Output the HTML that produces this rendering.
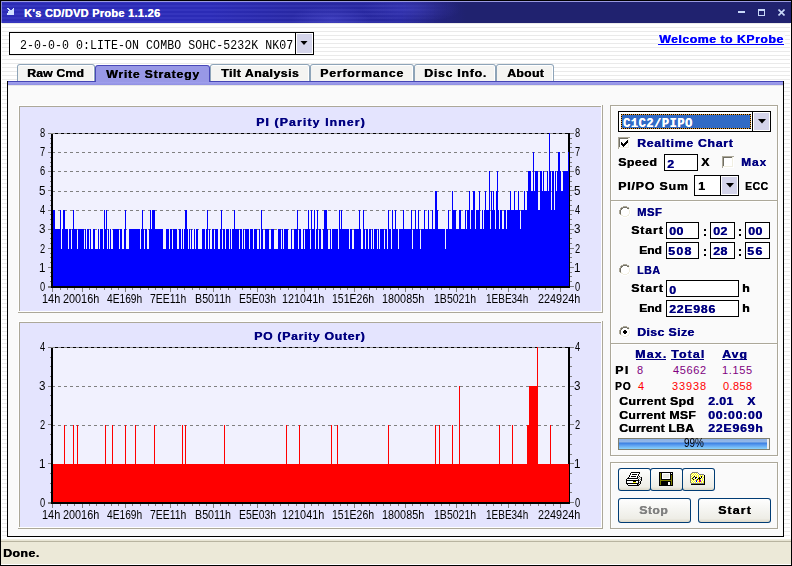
<!DOCTYPE html><html><head><meta charset="utf-8"><style>
html,body{margin:0;padding:0;}
body{width:792px;height:566px;position:relative;overflow:hidden;background:#fff;font-family:"Liberation Sans",sans-serif;}
#root>div,#root>svg{position:absolute;}
.t{white-space:pre;}
</style></head><body><div id="root">
<div style="left:0px;top:0px;width:792px;height:566px;background:#000"></div>
<div style="left:1px;top:23px;width:790px;height:542px;background:#fff"></div>
<div style="left:2px;top:23px;width:788px;height:541px;background:repeating-linear-gradient(to bottom,#eaeaea 0,#eaeaea 1px,#fff 1px,#fff 4px)"></div>
<div style="left:1px;top:1px;width:790px;height:22px;background:radial-gradient(ellipse 40px 14px at 330px 18px,rgba(90,90,230,0.35),transparent),radial-gradient(ellipse 50px 14px at 410px 8px,rgba(90,90,230,0.3),transparent),linear-gradient(to right,#2d2dbc 0,#2d2dbc 210px,#2a2aaa 290px,#2828a2 400px,#23237e 440px,#20226f 465px,#20226f 100%)"></div>
<div style="left:1px;top:1px;width:790px;height:22px;background:repeating-linear-gradient(to bottom,rgba(255,255,255,0.04) 0,rgba(255,255,255,0.04) 2px,rgba(0,0,0,0.03) 2px,rgba(0,0,0,0.03) 4px);-webkit-mask-image:linear-gradient(to right,#000 0,#000 380px,transparent 450px)"></div>
<div style="left:1px;top:1px;width:790px;height:1px;background:#9a9ae0"></div>
<div style="left:1px;top:1px;width:1px;height:22px;background:#8888d8"></div>
<svg style="left:7px;top:8px" width="7" height="7" shape-rendering="crispEdges"><rect x="0" y="0" width="1" height="1" fill="#d0e0ff"/><rect x="1" y="0" width="1" height="1" fill="#d0e0ff"/><rect x="6" y="0" width="1" height="1" fill="#d0e0ff"/><rect x="1" y="1" width="1" height="1" fill="#d0e0ff"/><rect x="2" y="1" width="1" height="1" fill="#d0e0ff"/><rect x="5" y="1" width="1" height="1" fill="#d0e0ff"/><rect x="6" y="1" width="1" height="1" fill="#d0e0ff"/><rect x="2" y="2" width="1" height="1" fill="#d0e0ff"/><rect x="3" y="2" width="1" height="1" fill="#d0e0ff"/><rect x="4" y="2" width="1" height="1" fill="#d0e0ff"/><rect x="5" y="2" width="1" height="1" fill="#d0e0ff"/><rect x="6" y="2" width="1" height="1" fill="#d0e0ff"/><rect x="1" y="3" width="1" height="1" fill="#d0e0ff"/><rect x="2" y="3" width="1" height="1" fill="#d0e0ff"/><rect x="3" y="3" width="1" height="1" fill="#d0e0ff"/><rect x="4" y="3" width="1" height="1" fill="#d0e0ff"/><rect x="5" y="3" width="1" height="1" fill="#d0e0ff"/><rect x="6" y="3" width="1" height="1" fill="#d0e0ff"/><rect x="1" y="4" width="1" height="1" fill="#d0e0ff"/><rect x="2" y="4" width="1" height="1" fill="#d0e0ff"/><rect x="3" y="4" width="1" height="1" fill="#d0e0ff"/><rect x="4" y="4" width="1" height="1" fill="#d0e0ff"/><rect x="5" y="4" width="1" height="1" fill="#d0e0ff"/><rect x="6" y="4" width="1" height="1" fill="#d0e0ff"/><rect x="0" y="5" width="1" height="1" fill="#d0e0ff"/><rect x="1" y="5" width="1" height="1" fill="#d0e0ff"/><rect x="2" y="5" width="1" height="1" fill="#d0e0ff"/><rect x="3" y="5" width="1" height="1" fill="#d0e0ff"/><rect x="4" y="5" width="1" height="1" fill="#d0e0ff"/><rect x="5" y="5" width="1" height="1" fill="#d0e0ff"/><rect x="6" y="5" width="1" height="1" fill="#d0e0ff"/><rect x="0" y="6" width="1" height="1" fill="#d0e0ff"/><rect x="1" y="6" width="1" height="1" fill="#d0e0ff"/><rect x="2" y="6" width="1" height="1" fill="#d0e0ff"/><rect x="3" y="6" width="1" height="1" fill="#d0e0ff"/><rect x="4" y="6" width="1" height="1" fill="#d0e0ff"/><rect x="5" y="6" width="1" height="1" fill="#d0e0ff"/><rect x="6" y="6" width="1" height="1" fill="#d0e0ff"/></svg>
<div style="left:738px;top:11px;width:7px;height:2px;background:#c8d8f8"></div>
<div style="left:758px;top:9px;width:7px;height:1px;background:#c8d8f8"></div>
<div style="left:758px;top:15px;width:7px;height:1px;background:#c8d8f8"></div>
<div style="left:758px;top:9px;width:1px;height:7px;background:#c8d8f8"></div>
<div style="left:764px;top:9px;width:1px;height:7px;background:#c8d8f8"></div>
<div style="left:758px;top:10px;width:7px;height:1px;background:#c8d8f8"></div>
<svg style="left:778px;top:9px" width="7" height="7" viewBox="0 0 7 7"><path d="M0.5 0.5L6.5 6.5M6.5 0.5L0.5 6.5" stroke="#c8d8f8" stroke-width="1.6"/></svg>
<div class="t" style="left:24.00px;top:8.00px;color:#fff;font:bold 11px 'Liberation Sans';line-height:11px;letter-spacing:0.288px;text-shadow:0.35px 0 0 currentColor;text-shadow:0.2px 0 0 #fff;">K's CD/DVD Probe 1.1.26</div>
<div style="left:9px;top:32px;width:305px;height:23px;background:#000"></div>
<div style="left:10px;top:33px;width:303px;height:21px;background:#fff"></div>
<div style="left:295px;top:33px;width:1px;height:21px;background:#000"></div>
<div style="left:296px;top:33px;width:17px;height:21px;background:#fff"></div>
<div style="left:297px;top:34px;width:15px;height:19px;background:#d4d4ea"></div>
<svg style="left:300px;top:41px" width="8" height="5" viewBox="0 0 8 5"><path d="M0.5 0h7L4 4z" fill="#000"/></svg>
<div class="t" style="left:20.00px;top:40.00px;color:#000;font:normal 12px 'Liberation Mono';line-height:12px;letter-spacing:0.055px;transform:scale(0.9656,1.0);transform-origin:0 0;">2-0-0-0 0:LITE-ON COMBO SOHC-5232K NK07</div>
<div style="left:658px;top:32px;width:127px;height:13px;background:#fcfcfc"></div>
<div class="t" style="left:659.00px;top:34.00px;color:#0000ff;font:bold 11px 'Liberation Sans';line-height:11px;letter-spacing:0.445px;transform:scale(1.1200,1.0);transform-origin:0 0;text-shadow:0.35px 0 0 currentColor;">Welcome to KProbe</div>
<div style="left:658px;top:44px;width:126px;height:1px;background:#0000ff"></div>
<div style="left:7px;top:81px;width:777px;height:456px;background:#000"></div>
<div style="left:8px;top:82px;width:775px;height:454px;background:#fafafa"></div>
<div style="left:8px;top:81px;width:775px;height:1px;background:#4545b5"></div>
<div style="left:8px;top:82px;width:775px;height:3px;background:linear-gradient(to bottom,#a0a0ee,#9090e2)"></div>
<div style="left:8px;top:85px;width:775px;height:1px;background:#e6e6e6"></div>
<div style="left:17px;top:64px;width:78px;height:18px;background:#8ea4b8;border-radius:3px 3px 0 0"></div>
<div style="left:18px;top:65px;width:76px;height:16px;background:#fff;border-radius:2px 2px 0 0"></div>
<div style="left:18px;top:66px;width:75px;height:15px;background:#f4f4f2"></div>
<div class="t" style="left:27.00px;top:68.00px;color:#000;font:bold 11px 'Liberation Sans';line-height:11px;letter-spacing:0.100px;transform:scale(1.1200,1.0);transform-origin:0 0;text-shadow:0.35px 0 0 currentColor;">Raw Cmd</div>
<div style="left:210px;top:64px;width:100px;height:18px;background:#8ea4b8;border-radius:3px 3px 0 0"></div>
<div style="left:211px;top:65px;width:98px;height:16px;background:#fff;border-radius:2px 2px 0 0"></div>
<div style="left:211px;top:66px;width:97px;height:15px;background:#f4f4f2"></div>
<div class="t" style="left:221.00px;top:68.00px;color:#000;font:bold 11px 'Liberation Sans';line-height:11px;letter-spacing:0.430px;transform:scale(1.1200,1.0);transform-origin:0 0;text-shadow:0.35px 0 0 currentColor;">Tilt Analysis</div>
<div style="left:310px;top:64px;width:104px;height:18px;background:#8ea4b8;border-radius:3px 3px 0 0"></div>
<div style="left:311px;top:65px;width:102px;height:16px;background:#fff;border-radius:2px 2px 0 0"></div>
<div style="left:311px;top:66px;width:101px;height:15px;background:#f4f4f2"></div>
<div class="t" style="left:320.00px;top:68.00px;color:#000;font:bold 11px 'Liberation Sans';line-height:11px;letter-spacing:0.697px;transform:scale(1.1200,1.0);transform-origin:0 0;text-shadow:0.35px 0 0 currentColor;">Performance</div>
<div style="left:414px;top:64px;width:82px;height:18px;background:#8ea4b8;border-radius:3px 3px 0 0"></div>
<div style="left:415px;top:65px;width:80px;height:16px;background:#fff;border-radius:2px 2px 0 0"></div>
<div style="left:415px;top:66px;width:79px;height:15px;background:#f4f4f2"></div>
<div class="t" style="left:424.00px;top:68.00px;color:#000;font:bold 11px 'Liberation Sans';line-height:11px;letter-spacing:0.656px;transform:scale(1.1200,1.0);transform-origin:0 0;text-shadow:0.35px 0 0 currentColor;">Disc Info.</div>
<div style="left:496px;top:64px;width:58px;height:18px;background:#8ea4b8;border-radius:3px 3px 0 0"></div>
<div style="left:497px;top:65px;width:56px;height:16px;background:#fff;border-radius:2px 2px 0 0"></div>
<div style="left:497px;top:66px;width:55px;height:15px;background:#f4f4f2"></div>
<div class="t" style="left:507.00px;top:68.00px;color:#000;font:bold 11px 'Liberation Sans';line-height:11px;letter-spacing:0.234px;transform:scale(1.1200,1.0);transform-origin:0 0;text-shadow:0.35px 0 0 currentColor;">About</div>
<div style="left:17px;top:81px;width:537px;height:1px;background:#4545b5"></div>
<div style="left:95px;top:65px;width:115px;height:17px;background:#4848b8;border-radius:3px 3px 0 0"></div>
<div style="left:96px;top:66px;width:113px;height:16px;background:#9898e6;border-radius:2px 2px 0 0"></div>
<div style="left:95px;top:82px;width:115px;height:3px;background:linear-gradient(to bottom,#a0a0ee,#9090e2)"></div>
<div class="t" style="left:106.00px;top:69.00px;color:#000;font:bold 11px 'Liberation Sans';line-height:11px;letter-spacing:0.667px;transform:scale(1.1200,1.0);transform-origin:0 0;text-shadow:0.35px 0 0 currentColor;">Write Strategy</div>
<div style="left:1px;top:539px;width:790px;height:1px;background:#f0eee2"></div>
<div style="left:1px;top:540px;width:790px;height:1px;background:#e8e5d4"></div>
<div style="left:1px;top:541px;width:790px;height:1px;background:#b8b4a0"></div>
<div style="left:1px;top:542px;width:790px;height:22px;background:#ece9d8"></div>
<div style="left:1px;top:564px;width:790px;height:1px;background:#fff"></div>
<div class="t" style="left:3.00px;top:548.00px;color:#000;font:bold 11px 'Liberation Sans';line-height:11px;letter-spacing:0.411px;transform:scale(1.1200,1.0);transform-origin:0 0;text-shadow:0.35px 0 0 currentColor;">Done.</div>
<div style="left:18px;top:105px;width:584px;height:1px;background:#fff"></div>
<div style="left:18px;top:105px;width:1px;height:207px;background:#fff"></div>
<div style="left:19px;top:106px;width:583px;height:1px;background:#aca899"></div>
<div style="left:19px;top:106px;width:1px;height:206px;background:#aca899"></div>
<div style="left:602px;top:105px;width:1px;height:208px;background:#aca899"></div>
<div style="left:18px;top:312px;width:585px;height:1px;background:#aca899"></div>
<div style="left:601px;top:106px;width:1px;height:206px;background:#fff"></div>
<div style="left:19px;top:311px;width:583px;height:1px;background:#fff"></div>
<div style="left:20px;top:107px;width:581px;height:204px;background:#e4e4fe"></div>
<div style="left:53px;top:134px;width:515px;height:152px;background:#f1f1fe"></div>
<svg style="left:0;top:0" width="792" height="566" shape-rendering="crispEdges"><line x1="53" y1="268.5" x2="568" y2="268.5" stroke="#808080" stroke-dasharray="3 3" stroke-dashoffset="1"/><line x1="53" y1="249.5" x2="568" y2="249.5" stroke="#808080" stroke-dasharray="3 3" stroke-dashoffset="1"/><line x1="53" y1="229.5" x2="568" y2="229.5" stroke="#808080" stroke-dasharray="3 3" stroke-dashoffset="1"/><line x1="53" y1="210.5" x2="568" y2="210.5" stroke="#808080" stroke-dasharray="3 3" stroke-dashoffset="1"/><line x1="53" y1="191.5" x2="568" y2="191.5" stroke="#808080" stroke-dasharray="3 3" stroke-dashoffset="1"/><line x1="53" y1="171.5" x2="568" y2="171.5" stroke="#808080" stroke-dasharray="3 3" stroke-dashoffset="1"/><line x1="53" y1="152.5" x2="568" y2="152.5" stroke="#808080" stroke-dasharray="3 3" stroke-dashoffset="1"/><line x1="48" y1="133.5" x2="574" y2="133.5" stroke="#909090"/><line x1="53" y1="133.5" x2="568" y2="133.5" stroke="#000" stroke-dasharray="3 3" stroke-dashoffset="4"/><path d="M53 210h1V286h-1zM54 210h1V286h-1zM55 229h1V286h-1zM56 229h1V286h-1zM57 229h1V286h-1zM58 229h1V286h-1zM59 229h1V286h-1zM60 210h1V286h-1zM61 249h1V286h-1zM62 229h1V286h-1zM63 210h1V286h-1zM64 210h1V286h-1zM65 229h1V286h-1zM66 229h1V286h-1zM67 229h1V286h-1zM68 249h1V286h-1zM69 229h1V286h-1zM70 229h1V286h-1zM71 249h1V286h-1zM72 229h1V286h-1zM73 210h1V286h-1zM74 229h1V286h-1zM75 229h1V286h-1zM76 229h1V286h-1zM77 249h1V286h-1zM78 229h1V286h-1zM79 229h1V286h-1zM80 229h1V286h-1zM81 229h1V286h-1zM82 229h1V286h-1zM83 229h1V286h-1zM84 249h1V286h-1zM85 229h1V286h-1zM86 249h1V286h-1zM87 229h1V286h-1zM88 229h1V286h-1zM89 249h1V286h-1zM90 229h1V286h-1zM91 249h1V286h-1zM92 249h1V286h-1zM93 229h1V286h-1zM94 229h1V286h-1zM95 249h1V286h-1zM96 249h1V286h-1zM97 249h1V286h-1zM98 229h1V286h-1zM99 249h1V286h-1zM100 229h1V286h-1zM101 229h1V286h-1zM102 229h1V286h-1zM103 249h1V286h-1zM104 210h1V286h-1zM105 229h1V286h-1zM106 210h1V286h-1zM107 249h1V286h-1zM108 229h1V286h-1zM109 249h1V286h-1zM110 229h1V286h-1zM111 249h1V286h-1zM112 249h1V286h-1zM113 229h1V286h-1zM114 229h1V286h-1zM115 229h1V286h-1zM116 229h1V286h-1zM117 229h1V286h-1zM118 229h1V286h-1zM119 249h1V286h-1zM120 229h1V286h-1zM121 229h1V286h-1zM122 249h1V286h-1zM123 249h1V286h-1zM124 229h1V286h-1zM125 210h1V286h-1zM126 249h1V286h-1zM127 249h1V286h-1zM128 249h1V286h-1zM129 229h1V286h-1zM130 229h1V286h-1zM131 229h1V286h-1zM132 229h1V286h-1zM133 229h1V286h-1zM134 229h1V286h-1zM135 229h1V286h-1zM136 229h1V286h-1zM137 229h1V286h-1zM138 229h1V286h-1zM139 229h1V286h-1zM140 249h1V286h-1zM141 229h1V286h-1zM142 210h1V286h-1zM143 229h1V286h-1zM144 249h1V286h-1zM145 229h1V286h-1zM146 229h1V286h-1zM147 249h1V286h-1zM148 249h1V286h-1zM149 229h1V286h-1zM150 210h1V286h-1zM151 229h1V286h-1zM152 210h1V286h-1zM153 210h1V286h-1zM154 210h1V286h-1zM155 229h1V286h-1zM156 229h1V286h-1zM157 229h1V286h-1zM158 229h1V286h-1zM159 229h1V286h-1zM160 229h1V286h-1zM161 229h1V286h-1zM162 229h1V286h-1zM163 249h1V286h-1zM164 249h1V286h-1zM165 249h1V286h-1zM166 229h1V286h-1zM167 229h1V286h-1zM168 229h1V286h-1zM169 249h1V286h-1zM170 229h1V286h-1zM171 229h1V286h-1zM172 249h1V286h-1zM173 229h1V286h-1zM174 229h1V286h-1zM175 229h1V286h-1zM176 229h1V286h-1zM177 249h1V286h-1zM178 249h1V286h-1zM179 229h1V286h-1zM180 229h1V286h-1zM181 249h1V286h-1zM182 229h1V286h-1zM183 249h1V286h-1zM184 229h1V286h-1zM185 210h1V286h-1zM186 210h1V286h-1zM187 229h1V286h-1zM188 249h1V286h-1zM189 229h1V286h-1zM190 249h1V286h-1zM191 229h1V286h-1zM192 249h1V286h-1zM193 249h1V286h-1zM194 229h1V286h-1zM195 249h1V286h-1zM196 229h1V286h-1zM197 229h1V286h-1zM198 249h1V286h-1zM199 249h1V286h-1zM200 249h1V286h-1zM201 249h1V286h-1zM202 229h1V286h-1zM203 229h1V286h-1zM204 229h1V286h-1zM205 249h1V286h-1zM206 229h1V286h-1zM207 210h1V286h-1zM208 249h1V286h-1zM209 229h1V286h-1zM210 249h1V286h-1zM211 249h1V286h-1zM212 229h1V286h-1zM213 229h1V286h-1zM214 249h1V286h-1zM215 229h1V286h-1zM216 229h1V286h-1zM217 229h1V286h-1zM218 249h1V286h-1zM219 249h1V286h-1zM220 229h1V286h-1zM221 210h1V286h-1zM222 249h1V286h-1zM223 229h1V286h-1zM224 229h1V286h-1zM225 249h1V286h-1zM226 229h1V286h-1zM227 229h1V286h-1zM228 229h1V286h-1zM229 249h1V286h-1zM230 229h1V286h-1zM231 249h1V286h-1zM232 229h1V286h-1zM233 229h1V286h-1zM234 210h1V286h-1zM235 229h1V286h-1zM236 229h1V286h-1zM237 229h1V286h-1zM238 229h1V286h-1zM239 249h1V286h-1zM240 229h1V286h-1zM241 229h1V286h-1zM242 249h1V286h-1zM243 229h1V286h-1zM244 249h1V286h-1zM245 229h1V286h-1zM246 229h1V286h-1zM247 229h1V286h-1zM248 229h1V286h-1zM249 249h1V286h-1zM250 229h1V286h-1zM251 229h1V286h-1zM252 229h1V286h-1zM253 249h1V286h-1zM254 229h1V286h-1zM255 229h1V286h-1zM256 229h1V286h-1zM257 249h1V286h-1zM258 249h1V286h-1zM259 229h1V286h-1zM260 249h1V286h-1zM261 210h1V286h-1zM262 229h1V286h-1zM263 249h1V286h-1zM264 249h1V286h-1zM265 229h1V286h-1zM266 229h1V286h-1zM267 229h1V286h-1zM268 229h1V286h-1zM269 249h1V286h-1zM270 249h1V286h-1zM271 229h1V286h-1zM272 229h1V286h-1zM273 229h1V286h-1zM274 249h1V286h-1zM275 249h1V286h-1zM276 249h1V286h-1zM277 249h1V286h-1zM278 229h1V286h-1zM279 229h1V286h-1zM280 229h1V286h-1zM281 249h1V286h-1zM282 229h1V286h-1zM283 249h1V286h-1zM284 229h1V286h-1zM285 229h1V286h-1zM286 229h1V286h-1zM287 229h1V286h-1zM288 249h1V286h-1zM289 249h1V286h-1zM290 249h1V286h-1zM291 229h1V286h-1zM292 249h1V286h-1zM293 249h1V286h-1zM294 229h1V286h-1zM295 229h1V286h-1zM296 229h1V286h-1zM297 210h1V286h-1zM298 249h1V286h-1zM299 229h1V286h-1zM300 229h1V286h-1zM301 249h1V286h-1zM302 249h1V286h-1zM303 229h1V286h-1zM304 249h1V286h-1zM305 229h1V286h-1zM306 229h1V286h-1zM307 229h1V286h-1zM308 210h1V286h-1zM309 229h1V286h-1zM310 249h1V286h-1zM311 210h1V286h-1zM312 229h1V286h-1zM313 229h1V286h-1zM314 210h1V286h-1zM315 249h1V286h-1zM316 229h1V286h-1zM317 210h1V286h-1zM318 249h1V286h-1zM319 229h1V286h-1zM320 229h1V286h-1zM321 249h1V286h-1zM322 249h1V286h-1zM323 229h1V286h-1zM324 210h1V286h-1zM325 210h1V286h-1zM326 210h1V286h-1zM327 229h1V286h-1zM328 249h1V286h-1zM329 249h1V286h-1zM330 229h1V286h-1zM331 249h1V286h-1zM332 229h1V286h-1zM333 229h1V286h-1zM334 229h1V286h-1zM335 229h1V286h-1zM336 229h1V286h-1zM337 229h1V286h-1zM338 249h1V286h-1zM339 210h1V286h-1zM340 229h1V286h-1zM341 210h1V286h-1zM342 229h1V286h-1zM343 229h1V286h-1zM344 229h1V286h-1zM345 229h1V286h-1zM346 229h1V286h-1zM347 229h1V286h-1zM348 229h1V286h-1zM349 249h1V286h-1zM350 229h1V286h-1zM351 229h1V286h-1zM352 249h1V286h-1zM353 249h1V286h-1zM354 229h1V286h-1zM355 229h1V286h-1zM356 229h1V286h-1zM357 229h1V286h-1zM358 229h1V286h-1zM359 210h1V286h-1zM360 229h1V286h-1zM361 249h1V286h-1zM362 249h1V286h-1zM363 210h1V286h-1zM364 229h1V286h-1zM365 249h1V286h-1zM366 229h1V286h-1zM367 229h1V286h-1zM368 249h1V286h-1zM369 229h1V286h-1zM370 229h1V286h-1zM371 249h1V286h-1zM372 229h1V286h-1zM373 249h1V286h-1zM374 229h1V286h-1zM375 229h1V286h-1zM376 229h1V286h-1zM377 249h1V286h-1zM378 229h1V286h-1zM379 249h1V286h-1zM380 229h1V286h-1zM381 229h1V286h-1zM382 229h1V286h-1zM383 229h1V286h-1zM384 249h1V286h-1zM385 229h1V286h-1zM386 229h1V286h-1zM387 249h1V286h-1zM388 210h1V286h-1zM389 229h1V286h-1zM390 229h1V286h-1zM391 249h1V286h-1zM392 210h1V286h-1zM393 229h1V286h-1zM394 229h1V286h-1zM395 210h1V286h-1zM396 229h1V286h-1zM397 229h1V286h-1zM398 249h1V286h-1zM399 229h1V286h-1zM400 229h1V286h-1zM401 229h1V286h-1zM402 229h1V286h-1zM403 210h1V286h-1zM404 229h1V286h-1zM405 229h1V286h-1zM406 229h1V286h-1zM407 229h1V286h-1zM408 229h1V286h-1zM409 229h1V286h-1zM410 229h1V286h-1zM411 210h1V286h-1zM412 249h1V286h-1zM413 229h1V286h-1zM414 229h1V286h-1zM415 210h1V286h-1zM416 229h1V286h-1zM417 229h1V286h-1zM418 210h1V286h-1zM419 229h1V286h-1zM420 249h1V286h-1zM421 229h1V286h-1zM422 229h1V286h-1zM423 229h1V286h-1zM424 210h1V286h-1zM425 229h1V286h-1zM426 229h1V286h-1zM427 229h1V286h-1zM428 210h1V286h-1zM429 229h1V286h-1zM430 229h1V286h-1zM431 229h1V286h-1zM432 210h1V286h-1zM433 229h1V286h-1zM434 229h1V286h-1zM435 191h1V286h-1zM436 191h1V286h-1zM437 210h1V286h-1zM438 229h1V286h-1zM439 229h1V286h-1zM440 229h1V286h-1zM441 229h1V286h-1zM442 229h1V286h-1zM443 229h1V286h-1zM444 229h1V286h-1zM445 249h1V286h-1zM446 229h1V286h-1zM447 229h1V286h-1zM448 210h1V286h-1zM449 229h1V286h-1zM450 229h1V286h-1zM451 229h1V286h-1zM452 191h1V286h-1zM453 210h1V286h-1zM454 210h1V286h-1zM455 210h1V286h-1zM456 229h1V286h-1zM457 229h1V286h-1zM458 229h1V286h-1zM459 210h1V286h-1zM460 210h1V286h-1zM461 229h1V286h-1zM462 229h1V286h-1zM463 229h1V286h-1zM464 229h1V286h-1zM465 210h1V286h-1zM466 229h1V286h-1zM467 210h1V286h-1zM468 210h1V286h-1zM469 191h1V286h-1zM470 229h1V286h-1zM471 210h1V286h-1zM472 210h1V286h-1zM473 191h1V286h-1zM474 191h1V286h-1zM475 229h1V286h-1zM476 210h1V286h-1zM477 210h1V286h-1zM478 210h1V286h-1zM479 191h1V286h-1zM480 229h1V286h-1zM481 229h1V286h-1zM482 210h1V286h-1zM483 229h1V286h-1zM484 210h1V286h-1zM485 191h1V286h-1zM486 210h1V286h-1zM487 210h1V286h-1zM488 210h1V286h-1zM489 171h1V286h-1zM490 229h1V286h-1zM491 191h1V286h-1zM492 210h1V286h-1zM493 191h1V286h-1zM494 210h1V286h-1zM495 229h1V286h-1zM496 191h1V286h-1zM497 171h1V286h-1zM498 210h1V286h-1zM499 229h1V286h-1zM500 210h1V286h-1zM501 210h1V286h-1zM502 229h1V286h-1zM503 229h1V286h-1zM504 210h1V286h-1zM505 210h1V286h-1zM506 229h1V286h-1zM507 210h1V286h-1zM508 210h1V286h-1zM509 210h1V286h-1zM510 191h1V286h-1zM511 210h1V286h-1zM512 210h1V286h-1zM513 210h1V286h-1zM514 191h1V286h-1zM515 210h1V286h-1zM516 210h1V286h-1zM517 210h1V286h-1zM518 191h1V286h-1zM519 210h1V286h-1zM520 229h1V286h-1zM521 210h1V286h-1zM522 210h1V286h-1zM523 210h1V286h-1zM524 191h1V286h-1zM525 210h1V286h-1zM526 210h1V286h-1zM527 191h1V286h-1zM528 171h1V286h-1zM529 171h1V286h-1zM530 171h1V286h-1zM531 191h1V286h-1zM532 191h1V286h-1zM533 152h1V286h-1zM534 191h1V286h-1zM535 171h1V286h-1zM536 171h1V286h-1zM537 171h1V286h-1zM538 210h1V286h-1zM539 210h1V286h-1zM540 171h1V286h-1zM541 171h1V286h-1zM542 191h1V286h-1zM543 171h1V286h-1zM544 191h1V286h-1zM545 191h1V286h-1zM546 191h1V286h-1zM547 171h1V286h-1zM548 191h1V286h-1zM549 133h1V286h-1zM550 171h1V286h-1zM551 210h1V286h-1zM552 171h1V286h-1zM553 171h1V286h-1zM554 210h1V286h-1zM555 171h1V286h-1zM556 191h1V286h-1zM557 171h1V286h-1zM558 152h1V286h-1zM559 152h1V286h-1zM560 171h1V286h-1zM561 191h1V286h-1zM562 191h1V286h-1zM563 171h1V286h-1zM564 171h1V286h-1zM565 171h1V286h-1zM566 171h1V286h-1zM567 171h1V286h-1zM568 152h1V286h-1z" fill="#0000ff"/><rect x="51" y="134" width="2" height="154" fill="#000"/><rect x="568" y="133" width="2" height="155" fill="#000"/><rect x="51" y="286" width="519" height="2" fill="#000"/><rect x="568" y="152" width="1" height="134" fill="#0000ff"/><rect x="48" y="286" width="3" height="1" fill="#808080"/><rect x="570" y="286" width="4" height="1" fill="#808080"/><rect x="50" y="281" width="1" height="1" fill="#808080"/><rect x="570" y="281" width="2" height="1" fill="#808080"/><rect x="50" y="276" width="1" height="1" fill="#808080"/><rect x="570" y="276" width="2" height="1" fill="#808080"/><rect x="50" y="272" width="1" height="1" fill="#808080"/><rect x="570" y="272" width="2" height="1" fill="#808080"/><rect x="48" y="267" width="3" height="1" fill="#808080"/><rect x="570" y="267" width="4" height="1" fill="#808080"/><rect x="50" y="262" width="1" height="1" fill="#808080"/><rect x="570" y="262" width="2" height="1" fill="#808080"/><rect x="50" y="257" width="1" height="1" fill="#808080"/><rect x="570" y="257" width="2" height="1" fill="#808080"/><rect x="50" y="253" width="1" height="1" fill="#808080"/><rect x="570" y="253" width="2" height="1" fill="#808080"/><rect x="48" y="248" width="3" height="1" fill="#808080"/><rect x="570" y="248" width="4" height="1" fill="#808080"/><rect x="50" y="243" width="1" height="1" fill="#808080"/><rect x="570" y="243" width="2" height="1" fill="#808080"/><rect x="50" y="238" width="1" height="1" fill="#808080"/><rect x="570" y="238" width="2" height="1" fill="#808080"/><rect x="50" y="233" width="1" height="1" fill="#808080"/><rect x="570" y="233" width="2" height="1" fill="#808080"/><rect x="48" y="229" width="3" height="1" fill="#808080"/><rect x="570" y="229" width="4" height="1" fill="#808080"/><rect x="50" y="224" width="1" height="1" fill="#808080"/><rect x="570" y="224" width="2" height="1" fill="#808080"/><rect x="50" y="219" width="1" height="1" fill="#808080"/><rect x="570" y="219" width="2" height="1" fill="#808080"/><rect x="50" y="214" width="1" height="1" fill="#808080"/><rect x="570" y="214" width="2" height="1" fill="#808080"/><rect x="48" y="210" width="3" height="1" fill="#808080"/><rect x="570" y="210" width="4" height="1" fill="#808080"/><rect x="50" y="205" width="1" height="1" fill="#808080"/><rect x="570" y="205" width="2" height="1" fill="#808080"/><rect x="50" y="200" width="1" height="1" fill="#808080"/><rect x="570" y="200" width="2" height="1" fill="#808080"/><rect x="50" y="195" width="1" height="1" fill="#808080"/><rect x="570" y="195" width="2" height="1" fill="#808080"/><rect x="48" y="190" width="3" height="1" fill="#808080"/><rect x="570" y="190" width="4" height="1" fill="#808080"/><rect x="50" y="186" width="1" height="1" fill="#808080"/><rect x="570" y="186" width="2" height="1" fill="#808080"/><rect x="50" y="181" width="1" height="1" fill="#808080"/><rect x="570" y="181" width="2" height="1" fill="#808080"/><rect x="50" y="176" width="1" height="1" fill="#808080"/><rect x="570" y="176" width="2" height="1" fill="#808080"/><rect x="48" y="171" width="3" height="1" fill="#808080"/><rect x="570" y="171" width="4" height="1" fill="#808080"/><rect x="50" y="166" width="1" height="1" fill="#808080"/><rect x="570" y="166" width="2" height="1" fill="#808080"/><rect x="50" y="162" width="1" height="1" fill="#808080"/><rect x="570" y="162" width="2" height="1" fill="#808080"/><rect x="50" y="157" width="1" height="1" fill="#808080"/><rect x="570" y="157" width="2" height="1" fill="#808080"/><rect x="48" y="152" width="3" height="1" fill="#808080"/><rect x="570" y="152" width="4" height="1" fill="#808080"/><rect x="50" y="147" width="1" height="1" fill="#808080"/><rect x="570" y="147" width="2" height="1" fill="#808080"/><rect x="50" y="143" width="1" height="1" fill="#808080"/><rect x="570" y="143" width="2" height="1" fill="#808080"/><rect x="50" y="138" width="1" height="1" fill="#808080"/><rect x="570" y="138" width="2" height="1" fill="#808080"/><rect x="48" y="133" width="3" height="1" fill="#808080"/><rect x="570" y="133" width="4" height="1" fill="#808080"/><rect x="48" y="287" width="3" height="1" fill="#808080"/><rect x="52" y="288" width="1" height="4" fill="#808080"/><rect x="82" y="288" width="1" height="4" fill="#808080"/><rect x="125" y="288" width="1" height="4" fill="#808080"/><rect x="170" y="288" width="1" height="4" fill="#808080"/><rect x="213" y="288" width="1" height="4" fill="#808080"/><rect x="257" y="288" width="1" height="4" fill="#808080"/><rect x="304" y="288" width="1" height="4" fill="#808080"/><rect x="354" y="288" width="1" height="4" fill="#808080"/><rect x="405" y="288" width="1" height="4" fill="#808080"/><rect x="456" y="288" width="1" height="4" fill="#808080"/><rect x="508" y="288" width="1" height="4" fill="#808080"/><rect x="560" y="288" width="1" height="4" fill="#808080"/><rect x="60" y="288" width="1" height="2" fill="#808080"/><rect x="67" y="288" width="1" height="2" fill="#808080"/><rect x="74" y="288" width="1" height="2" fill="#808080"/><rect x="89" y="288" width="1" height="2" fill="#808080"/><rect x="96" y="288" width="1" height="2" fill="#808080"/><rect x="104" y="288" width="1" height="2" fill="#808080"/><rect x="111" y="288" width="1" height="2" fill="#808080"/><rect x="118" y="288" width="1" height="2" fill="#808080"/><rect x="132" y="288" width="1" height="2" fill="#808080"/><rect x="140" y="288" width="1" height="2" fill="#808080"/><rect x="148" y="288" width="1" height="2" fill="#808080"/><rect x="155" y="288" width="1" height="2" fill="#808080"/><rect x="162" y="288" width="1" height="2" fill="#808080"/><rect x="177" y="288" width="1" height="2" fill="#808080"/><rect x="184" y="288" width="1" height="2" fill="#808080"/><rect x="192" y="288" width="1" height="2" fill="#808080"/><rect x="199" y="288" width="1" height="2" fill="#808080"/><rect x="206" y="288" width="1" height="2" fill="#808080"/><rect x="220" y="288" width="1" height="2" fill="#808080"/><rect x="228" y="288" width="1" height="2" fill="#808080"/><rect x="235" y="288" width="1" height="2" fill="#808080"/><rect x="242" y="288" width="1" height="2" fill="#808080"/><rect x="250" y="288" width="1" height="2" fill="#808080"/><rect x="265" y="288" width="1" height="2" fill="#808080"/><rect x="273" y="288" width="1" height="2" fill="#808080"/><rect x="280" y="288" width="1" height="2" fill="#808080"/><rect x="288" y="288" width="1" height="2" fill="#808080"/><rect x="296" y="288" width="1" height="2" fill="#808080"/><rect x="311" y="288" width="1" height="2" fill="#808080"/><rect x="318" y="288" width="1" height="2" fill="#808080"/><rect x="325" y="288" width="1" height="2" fill="#808080"/><rect x="333" y="288" width="1" height="2" fill="#808080"/><rect x="340" y="288" width="1" height="2" fill="#808080"/><rect x="347" y="288" width="1" height="2" fill="#808080"/><rect x="361" y="288" width="1" height="2" fill="#808080"/><rect x="369" y="288" width="1" height="2" fill="#808080"/><rect x="376" y="288" width="1" height="2" fill="#808080"/><rect x="383" y="288" width="1" height="2" fill="#808080"/><rect x="390" y="288" width="1" height="2" fill="#808080"/><rect x="398" y="288" width="1" height="2" fill="#808080"/><rect x="412" y="288" width="1" height="2" fill="#808080"/><rect x="420" y="288" width="1" height="2" fill="#808080"/><rect x="427" y="288" width="1" height="2" fill="#808080"/><rect x="434" y="288" width="1" height="2" fill="#808080"/><rect x="441" y="288" width="1" height="2" fill="#808080"/><rect x="449" y="288" width="1" height="2" fill="#808080"/><rect x="463" y="288" width="1" height="2" fill="#808080"/><rect x="471" y="288" width="1" height="2" fill="#808080"/><rect x="478" y="288" width="1" height="2" fill="#808080"/><rect x="486" y="288" width="1" height="2" fill="#808080"/><rect x="493" y="288" width="1" height="2" fill="#808080"/><rect x="501" y="288" width="1" height="2" fill="#808080"/><rect x="515" y="288" width="1" height="2" fill="#808080"/><rect x="523" y="288" width="1" height="2" fill="#808080"/><rect x="530" y="288" width="1" height="2" fill="#808080"/><rect x="538" y="288" width="1" height="2" fill="#808080"/><rect x="545" y="288" width="1" height="2" fill="#808080"/><rect x="553" y="288" width="1" height="2" fill="#808080"/></svg>
<div class="t" style="left:40.00px;top:280.00px;color:#000;font:normal 13px 'Liberation Sans';line-height:13px;letter-spacing:0.000px;transform:scale(0.7143,1.0);transform-origin:0 0;">0</div>
<div class="t" style="left:575.00px;top:280.00px;color:#000;font:normal 13px 'Liberation Sans';line-height:13px;letter-spacing:0.000px;transform:scale(0.7143,1.0);transform-origin:0 0;">0</div>
<div class="t" style="left:39.00px;top:261.00px;color:#000;font:normal 13px 'Liberation Sans';line-height:13px;letter-spacing:0.000px;transform:scale(0.8929,1.0);transform-origin:0 0;">1</div>
<div class="t" style="left:574.00px;top:261.00px;color:#000;font:normal 13px 'Liberation Sans';line-height:13px;letter-spacing:0.000px;transform:scale(0.8929,1.0);transform-origin:0 0;">1</div>
<div class="t" style="left:40.00px;top:242.00px;color:#000;font:normal 13px 'Liberation Sans';line-height:13px;letter-spacing:0.000px;transform:scale(0.7143,1.0);transform-origin:0 0;">2</div>
<div class="t" style="left:575.00px;top:242.00px;color:#000;font:normal 13px 'Liberation Sans';line-height:13px;letter-spacing:0.000px;transform:scale(0.7143,1.0);transform-origin:0 0;">2</div>
<div class="t" style="left:39.00px;top:222.00px;color:#000;font:normal 13px 'Liberation Sans';line-height:13px;letter-spacing:0.000px;transform:scale(0.8929,1.0);transform-origin:0 0;">3</div>
<div class="t" style="left:574.00px;top:222.00px;color:#000;font:normal 13px 'Liberation Sans';line-height:13px;letter-spacing:0.000px;transform:scale(0.8929,1.0);transform-origin:0 0;">3</div>
<div class="t" style="left:40.00px;top:203.00px;color:#000;font:normal 13px 'Liberation Sans';line-height:13px;letter-spacing:0.000px;transform:scale(0.7143,1.0);transform-origin:0 0;">4</div>
<div class="t" style="left:575.00px;top:203.00px;color:#000;font:normal 13px 'Liberation Sans';line-height:13px;letter-spacing:0.000px;transform:scale(0.7143,1.0);transform-origin:0 0;">4</div>
<div class="t" style="left:39.00px;top:184.00px;color:#000;font:normal 13px 'Liberation Sans';line-height:13px;letter-spacing:0.000px;transform:scale(0.8929,1.0);transform-origin:0 0;">5</div>
<div class="t" style="left:574.00px;top:184.00px;color:#000;font:normal 13px 'Liberation Sans';line-height:13px;letter-spacing:0.000px;transform:scale(0.8929,1.0);transform-origin:0 0;">5</div>
<div class="t" style="left:40.00px;top:164.00px;color:#000;font:normal 13px 'Liberation Sans';line-height:13px;letter-spacing:0.000px;transform:scale(0.7143,1.0);transform-origin:0 0;">6</div>
<div class="t" style="left:575.00px;top:164.00px;color:#000;font:normal 13px 'Liberation Sans';line-height:13px;letter-spacing:0.000px;transform:scale(0.7143,1.0);transform-origin:0 0;">6</div>
<div class="t" style="left:40.00px;top:145.00px;color:#000;font:normal 13px 'Liberation Sans';line-height:13px;letter-spacing:0.000px;transform:scale(0.7143,1.0);transform-origin:0 0;">7</div>
<div class="t" style="left:575.00px;top:145.00px;color:#000;font:normal 13px 'Liberation Sans';line-height:13px;letter-spacing:0.000px;transform:scale(0.7143,1.0);transform-origin:0 0;">7</div>
<div class="t" style="left:40.00px;top:126.00px;color:#000;font:normal 13px 'Liberation Sans';line-height:13px;letter-spacing:0.000px;transform:scale(0.7143,1.0);transform-origin:0 0;">8</div>
<div class="t" style="left:575.00px;top:126.00px;color:#000;font:normal 13px 'Liberation Sans';line-height:13px;letter-spacing:0.000px;transform:scale(0.7143,1.0);transform-origin:0 0;">8</div>
<div class="t" style="left:42.00px;top:292.00px;color:#000;font:normal 13px 'Liberation Sans';line-height:13px;letter-spacing:0.000px;transform:scale(0.8417,1.0);transform-origin:0 0;">14h</div>
<div class="t" style="left:62.90px;top:292.00px;color:#000;font:normal 13px 'Liberation Sans';line-height:13px;letter-spacing:0.000px;transform:scale(0.8350,1.0);transform-origin:0 0;">20016h</div>
<div class="t" style="left:106.50px;top:292.00px;color:#000;font:normal 13px 'Liberation Sans';line-height:13px;letter-spacing:0.000px;transform:scale(0.7849,1.0);transform-origin:0 0;">4E169h</div>
<div class="t" style="left:150.30px;top:292.00px;color:#000;font:normal 13px 'Liberation Sans';line-height:13px;letter-spacing:0.000px;transform:scale(0.7995,1.0);transform-origin:0 0;">7EE11h</div>
<div class="t" style="left:194.58px;top:292.00px;color:#000;font:normal 13px 'Liberation Sans';line-height:13px;letter-spacing:0.000px;transform:scale(0.8218,1.0);transform-origin:0 0;">B5011h</div>
<div class="t" style="left:238.72px;top:292.00px;color:#000;font:normal 13px 'Liberation Sans';line-height:13px;letter-spacing:0.000px;transform:scale(0.8001,1.0);transform-origin:0 0;">E5E03h</div>
<div class="t" style="left:282.00px;top:292.00px;color:#000;font:normal 13px 'Liberation Sans';line-height:13px;letter-spacing:0.000px;transform:scale(0.8342,1.0);transform-origin:0 0;">121041h</div>
<div class="t" style="left:331.50px;top:292.00px;color:#000;font:normal 13px 'Liberation Sans';line-height:13px;letter-spacing:0.000px;transform:scale(0.8110,1.0);transform-origin:0 0;">151E26h</div>
<div class="t" style="left:382.00px;top:292.00px;color:#000;font:normal 13px 'Liberation Sans';line-height:13px;letter-spacing:0.000px;transform:scale(0.8342,1.0);transform-origin:0 0;">180085h</div>
<div class="t" style="left:433.50px;top:292.00px;color:#000;font:normal 13px 'Liberation Sans';line-height:13px;letter-spacing:0.000px;transform:scale(0.8110,1.0);transform-origin:0 0;">1B5021h</div>
<div class="t" style="left:485.90px;top:292.00px;color:#000;font:normal 13px 'Liberation Sans';line-height:13px;letter-spacing:0.000px;transform:scale(0.7682,1.0);transform-origin:0 0;">1EBE34h</div>
<div class="t" style="left:537.80px;top:292.00px;color:#000;font:normal 13px 'Liberation Sans';line-height:13px;letter-spacing:0.000px;transform:scale(0.8342,1.0);transform-origin:0 0;">224924h</div>
<div class="t" style="left:256.00px;top:117.00px;color:#000080;font:bold 11px 'Liberation Sans';line-height:11px;letter-spacing:0.980px;transform:scale(1.1200,1.0);transform-origin:0 0;text-shadow:0.35px 0 0 currentColor;">PI (Parity Inner)</div>
<div style="left:18px;top:321px;width:584px;height:1px;background:#fff"></div>
<div style="left:18px;top:321px;width:1px;height:207px;background:#fff"></div>
<div style="left:19px;top:322px;width:583px;height:1px;background:#aca899"></div>
<div style="left:19px;top:322px;width:1px;height:206px;background:#aca899"></div>
<div style="left:602px;top:321px;width:1px;height:208px;background:#aca899"></div>
<div style="left:18px;top:528px;width:585px;height:1px;background:#aca899"></div>
<div style="left:601px;top:322px;width:1px;height:206px;background:#fff"></div>
<div style="left:19px;top:527px;width:583px;height:1px;background:#fff"></div>
<div style="left:20px;top:323px;width:581px;height:204px;background:#e4e4fe"></div>
<div style="left:53px;top:348px;width:515px;height:154px;background:#f1f1fe"></div>
<svg style="left:0;top:0" width="792" height="566" shape-rendering="crispEdges"><line x1="53" y1="464.5" x2="568" y2="464.5" stroke="#808080" stroke-dasharray="3 3" stroke-dashoffset="1"/><line x1="53" y1="425.5" x2="568" y2="425.5" stroke="#808080" stroke-dasharray="3 3" stroke-dashoffset="1"/><line x1="53" y1="386.5" x2="568" y2="386.5" stroke="#808080" stroke-dasharray="3 3" stroke-dashoffset="1"/><line x1="48" y1="347.5" x2="574" y2="347.5" stroke="#909090"/><line x1="53" y1="347.5" x2="568" y2="347.5" stroke="#000" stroke-dasharray="3 3" stroke-dashoffset="4"/><path d="M53 464h1V502h-1zM54 464h1V502h-1zM55 464h1V502h-1zM56 464h1V502h-1zM57 464h1V502h-1zM58 464h1V502h-1zM59 464h1V502h-1zM60 464h1V502h-1zM61 464h1V502h-1zM62 464h1V502h-1zM63 464h1V502h-1zM64 425h1V502h-1zM65 464h1V502h-1zM66 464h1V502h-1zM67 464h1V502h-1zM68 464h1V502h-1zM69 464h1V502h-1zM70 464h1V502h-1zM71 464h1V502h-1zM72 464h1V502h-1zM73 425h1V502h-1zM74 464h1V502h-1zM75 464h1V502h-1zM76 464h1V502h-1zM77 425h1V502h-1zM78 464h1V502h-1zM79 464h1V502h-1zM80 464h1V502h-1zM81 464h1V502h-1zM82 464h1V502h-1zM83 464h1V502h-1zM84 464h1V502h-1zM85 464h1V502h-1zM86 464h1V502h-1zM87 464h1V502h-1zM88 464h1V502h-1zM89 464h1V502h-1zM90 464h1V502h-1zM91 464h1V502h-1zM92 464h1V502h-1zM93 464h1V502h-1zM94 464h1V502h-1zM95 464h1V502h-1zM96 464h1V502h-1zM97 464h1V502h-1zM98 464h1V502h-1zM99 464h1V502h-1zM100 464h1V502h-1zM101 464h1V502h-1zM102 464h1V502h-1zM103 464h1V502h-1zM104 464h1V502h-1zM105 425h1V502h-1zM106 464h1V502h-1zM107 464h1V502h-1zM108 464h1V502h-1zM109 464h1V502h-1zM110 464h1V502h-1zM111 464h1V502h-1zM112 425h1V502h-1zM113 464h1V502h-1zM114 464h1V502h-1zM115 464h1V502h-1zM116 464h1V502h-1zM117 464h1V502h-1zM118 464h1V502h-1zM119 464h1V502h-1zM120 464h1V502h-1zM121 464h1V502h-1zM122 464h1V502h-1zM123 464h1V502h-1zM124 464h1V502h-1zM125 425h1V502h-1zM126 464h1V502h-1zM127 464h1V502h-1zM128 464h1V502h-1zM129 464h1V502h-1zM130 464h1V502h-1zM131 464h1V502h-1zM132 464h1V502h-1zM133 464h1V502h-1zM134 464h1V502h-1zM135 425h1V502h-1zM136 464h1V502h-1zM137 464h1V502h-1zM138 464h1V502h-1zM139 464h1V502h-1zM140 464h1V502h-1zM141 464h1V502h-1zM142 464h1V502h-1zM143 464h1V502h-1zM144 464h1V502h-1zM145 464h1V502h-1zM146 464h1V502h-1zM147 464h1V502h-1zM148 464h1V502h-1zM149 464h1V502h-1zM150 464h1V502h-1zM151 464h1V502h-1zM152 464h1V502h-1zM153 464h1V502h-1zM154 425h1V502h-1zM155 464h1V502h-1zM156 464h1V502h-1zM157 464h1V502h-1zM158 464h1V502h-1zM159 464h1V502h-1zM160 464h1V502h-1zM161 464h1V502h-1zM162 464h1V502h-1zM163 464h1V502h-1zM164 464h1V502h-1zM165 464h1V502h-1zM166 464h1V502h-1zM167 464h1V502h-1zM168 464h1V502h-1zM169 464h1V502h-1zM170 464h1V502h-1zM171 464h1V502h-1zM172 464h1V502h-1zM173 464h1V502h-1zM174 464h1V502h-1zM175 464h1V502h-1zM176 464h1V502h-1zM177 464h1V502h-1zM178 464h1V502h-1zM179 464h1V502h-1zM180 464h1V502h-1zM181 464h1V502h-1zM182 425h1V502h-1zM183 464h1V502h-1zM184 464h1V502h-1zM185 425h1V502h-1zM186 464h1V502h-1zM187 464h1V502h-1zM188 464h1V502h-1zM189 464h1V502h-1zM190 464h1V502h-1zM191 464h1V502h-1zM192 464h1V502h-1zM193 464h1V502h-1zM194 464h1V502h-1zM195 464h1V502h-1zM196 464h1V502h-1zM197 464h1V502h-1zM198 464h1V502h-1zM199 464h1V502h-1zM200 464h1V502h-1zM201 464h1V502h-1zM202 464h1V502h-1zM203 464h1V502h-1zM204 464h1V502h-1zM205 464h1V502h-1zM206 464h1V502h-1zM207 464h1V502h-1zM208 464h1V502h-1zM209 464h1V502h-1zM210 464h1V502h-1zM211 464h1V502h-1zM212 464h1V502h-1zM213 464h1V502h-1zM214 464h1V502h-1zM215 464h1V502h-1zM216 464h1V502h-1zM217 464h1V502h-1zM218 464h1V502h-1zM219 464h1V502h-1zM220 464h1V502h-1zM221 464h1V502h-1zM222 464h1V502h-1zM223 464h1V502h-1zM224 425h1V502h-1zM225 464h1V502h-1zM226 464h1V502h-1zM227 464h1V502h-1zM228 464h1V502h-1zM229 464h1V502h-1zM230 464h1V502h-1zM231 464h1V502h-1zM232 464h1V502h-1zM233 464h1V502h-1zM234 464h1V502h-1zM235 464h1V502h-1zM236 464h1V502h-1zM237 464h1V502h-1zM238 464h1V502h-1zM239 464h1V502h-1zM240 464h1V502h-1zM241 464h1V502h-1zM242 464h1V502h-1zM243 464h1V502h-1zM244 464h1V502h-1zM245 464h1V502h-1zM246 464h1V502h-1zM247 464h1V502h-1zM248 464h1V502h-1zM249 464h1V502h-1zM250 464h1V502h-1zM251 464h1V502h-1zM252 464h1V502h-1zM253 464h1V502h-1zM254 464h1V502h-1zM255 464h1V502h-1zM256 464h1V502h-1zM257 464h1V502h-1zM258 464h1V502h-1zM259 464h1V502h-1zM260 464h1V502h-1zM261 464h1V502h-1zM262 464h1V502h-1zM263 464h1V502h-1zM264 464h1V502h-1zM265 464h1V502h-1zM266 464h1V502h-1zM267 464h1V502h-1zM268 464h1V502h-1zM269 464h1V502h-1zM270 464h1V502h-1zM271 464h1V502h-1zM272 464h1V502h-1zM273 464h1V502h-1zM274 464h1V502h-1zM275 464h1V502h-1zM276 464h1V502h-1zM277 464h1V502h-1zM278 464h1V502h-1zM279 464h1V502h-1zM280 464h1V502h-1zM281 464h1V502h-1zM282 464h1V502h-1zM283 464h1V502h-1zM284 464h1V502h-1zM285 464h1V502h-1zM286 425h1V502h-1zM287 464h1V502h-1zM288 464h1V502h-1zM289 464h1V502h-1zM290 464h1V502h-1zM291 464h1V502h-1zM292 464h1V502h-1zM293 464h1V502h-1zM294 464h1V502h-1zM295 464h1V502h-1zM296 464h1V502h-1zM297 464h1V502h-1zM298 464h1V502h-1zM299 425h1V502h-1zM300 464h1V502h-1zM301 464h1V502h-1zM302 464h1V502h-1zM303 464h1V502h-1zM304 464h1V502h-1zM305 464h1V502h-1zM306 464h1V502h-1zM307 464h1V502h-1zM308 464h1V502h-1zM309 464h1V502h-1zM310 464h1V502h-1zM311 464h1V502h-1zM312 464h1V502h-1zM313 464h1V502h-1zM314 464h1V502h-1zM315 464h1V502h-1zM316 464h1V502h-1zM317 464h1V502h-1zM318 464h1V502h-1zM319 464h1V502h-1zM320 464h1V502h-1zM321 464h1V502h-1zM322 464h1V502h-1zM323 464h1V502h-1zM324 464h1V502h-1zM325 464h1V502h-1zM326 464h1V502h-1zM327 464h1V502h-1zM328 464h1V502h-1zM329 464h1V502h-1zM330 464h1V502h-1zM331 425h1V502h-1zM332 464h1V502h-1zM333 464h1V502h-1zM334 464h1V502h-1zM335 464h1V502h-1zM336 464h1V502h-1zM337 425h1V502h-1zM338 464h1V502h-1zM339 464h1V502h-1zM340 464h1V502h-1zM341 464h1V502h-1zM342 464h1V502h-1zM343 464h1V502h-1zM344 464h1V502h-1zM345 464h1V502h-1zM346 464h1V502h-1zM347 464h1V502h-1zM348 464h1V502h-1zM349 464h1V502h-1zM350 464h1V502h-1zM351 464h1V502h-1zM352 464h1V502h-1zM353 464h1V502h-1zM354 464h1V502h-1zM355 464h1V502h-1zM356 464h1V502h-1zM357 464h1V502h-1zM358 464h1V502h-1zM359 464h1V502h-1zM360 464h1V502h-1zM361 464h1V502h-1zM362 464h1V502h-1zM363 464h1V502h-1zM364 464h1V502h-1zM365 464h1V502h-1zM366 464h1V502h-1zM367 464h1V502h-1zM368 464h1V502h-1zM369 464h1V502h-1zM370 464h1V502h-1zM371 464h1V502h-1zM372 464h1V502h-1zM373 464h1V502h-1zM374 464h1V502h-1zM375 464h1V502h-1zM376 464h1V502h-1zM377 464h1V502h-1zM378 464h1V502h-1zM379 464h1V502h-1zM380 464h1V502h-1zM381 464h1V502h-1zM382 464h1V502h-1zM383 464h1V502h-1zM384 464h1V502h-1zM385 464h1V502h-1zM386 464h1V502h-1zM387 464h1V502h-1zM388 425h1V502h-1zM389 464h1V502h-1zM390 464h1V502h-1zM391 464h1V502h-1zM392 464h1V502h-1zM393 464h1V502h-1zM394 464h1V502h-1zM395 464h1V502h-1zM396 464h1V502h-1zM397 464h1V502h-1zM398 464h1V502h-1zM399 464h1V502h-1zM400 464h1V502h-1zM401 464h1V502h-1zM402 464h1V502h-1zM403 464h1V502h-1zM404 464h1V502h-1zM405 464h1V502h-1zM406 464h1V502h-1zM407 464h1V502h-1zM408 464h1V502h-1zM409 464h1V502h-1zM410 464h1V502h-1zM411 464h1V502h-1zM412 464h1V502h-1zM413 464h1V502h-1zM414 464h1V502h-1zM415 464h1V502h-1zM416 464h1V502h-1zM417 464h1V502h-1zM418 464h1V502h-1zM419 464h1V502h-1zM420 464h1V502h-1zM421 464h1V502h-1zM422 464h1V502h-1zM423 464h1V502h-1zM424 464h1V502h-1zM425 464h1V502h-1zM426 464h1V502h-1zM427 464h1V502h-1zM428 464h1V502h-1zM429 464h1V502h-1zM430 464h1V502h-1zM431 464h1V502h-1zM432 464h1V502h-1zM433 464h1V502h-1zM434 464h1V502h-1zM435 425h1V502h-1zM436 464h1V502h-1zM437 464h1V502h-1zM438 464h1V502h-1zM439 425h1V502h-1zM440 464h1V502h-1zM441 464h1V502h-1zM442 464h1V502h-1zM443 464h1V502h-1zM444 464h1V502h-1zM445 464h1V502h-1zM446 464h1V502h-1zM447 464h1V502h-1zM448 464h1V502h-1zM449 464h1V502h-1zM450 464h1V502h-1zM451 464h1V502h-1zM452 425h1V502h-1zM453 464h1V502h-1zM454 464h1V502h-1zM455 464h1V502h-1zM456 464h1V502h-1zM457 464h1V502h-1zM458 464h1V502h-1zM459 386h1V502h-1zM460 464h1V502h-1zM461 464h1V502h-1zM462 464h1V502h-1zM463 464h1V502h-1zM464 464h1V502h-1zM465 464h1V502h-1zM466 464h1V502h-1zM467 464h1V502h-1zM468 464h1V502h-1zM469 464h1V502h-1zM470 464h1V502h-1zM471 464h1V502h-1zM472 464h1V502h-1zM473 464h1V502h-1zM474 464h1V502h-1zM475 464h1V502h-1zM476 464h1V502h-1zM477 464h1V502h-1zM478 464h1V502h-1zM479 464h1V502h-1zM480 464h1V502h-1zM481 464h1V502h-1zM482 464h1V502h-1zM483 464h1V502h-1zM484 464h1V502h-1zM485 464h1V502h-1zM486 464h1V502h-1zM487 464h1V502h-1zM488 464h1V502h-1zM489 464h1V502h-1zM490 464h1V502h-1zM491 464h1V502h-1zM492 464h1V502h-1zM493 464h1V502h-1zM494 464h1V502h-1zM495 464h1V502h-1zM496 464h1V502h-1zM497 464h1V502h-1zM498 464h1V502h-1zM499 425h1V502h-1zM500 464h1V502h-1zM501 464h1V502h-1zM502 464h1V502h-1zM503 464h1V502h-1zM504 464h1V502h-1zM505 464h1V502h-1zM506 464h1V502h-1zM507 464h1V502h-1zM508 464h1V502h-1zM509 464h1V502h-1zM510 464h1V502h-1zM511 464h1V502h-1zM512 425h1V502h-1zM513 464h1V502h-1zM514 464h1V502h-1zM515 464h1V502h-1zM516 464h1V502h-1zM517 464h1V502h-1zM518 464h1V502h-1zM519 464h1V502h-1zM520 464h1V502h-1zM521 464h1V502h-1zM522 464h1V502h-1zM523 464h1V502h-1zM524 464h1V502h-1zM525 464h1V502h-1zM526 464h1V502h-1zM527 425h1V502h-1zM528 425h1V502h-1zM529 386h1V502h-1zM530 386h1V502h-1zM531 386h1V502h-1zM532 386h1V502h-1zM533 386h1V502h-1zM534 386h1V502h-1zM535 386h1V502h-1zM536 386h1V502h-1zM537 347h1V502h-1zM538 464h1V502h-1zM539 464h1V502h-1zM540 464h1V502h-1zM541 464h1V502h-1zM542 464h1V502h-1zM543 464h1V502h-1zM544 464h1V502h-1zM545 464h1V502h-1zM546 464h1V502h-1zM547 464h1V502h-1zM548 464h1V502h-1zM549 464h1V502h-1zM550 425h1V502h-1zM551 464h1V502h-1zM552 464h1V502h-1zM553 464h1V502h-1zM554 464h1V502h-1zM555 464h1V502h-1zM556 464h1V502h-1zM557 464h1V502h-1zM558 464h1V502h-1zM559 464h1V502h-1zM560 464h1V502h-1zM561 464h1V502h-1zM562 464h1V502h-1zM563 464h1V502h-1zM564 464h1V502h-1zM565 464h1V502h-1zM566 464h1V502h-1zM567 464h1V502h-1zM568 464h1V502h-1z" fill="#ff0000"/><rect x="51" y="348" width="2" height="156" fill="#000"/><rect x="568" y="347" width="2" height="157" fill="#000"/><rect x="51" y="502" width="519" height="2" fill="#000"/><rect x="568" y="464" width="1" height="38" fill="#ff0000"/><rect x="48" y="502" width="3" height="1" fill="#808080"/><rect x="570" y="502" width="4" height="1" fill="#808080"/><rect x="50" y="492" width="1" height="1" fill="#808080"/><rect x="570" y="492" width="2" height="1" fill="#808080"/><rect x="50" y="483" width="1" height="1" fill="#808080"/><rect x="570" y="483" width="2" height="1" fill="#808080"/><rect x="50" y="473" width="1" height="1" fill="#808080"/><rect x="570" y="473" width="2" height="1" fill="#808080"/><rect x="48" y="463" width="3" height="1" fill="#808080"/><rect x="570" y="463" width="4" height="1" fill="#808080"/><rect x="50" y="454" width="1" height="1" fill="#808080"/><rect x="570" y="454" width="2" height="1" fill="#808080"/><rect x="50" y="444" width="1" height="1" fill="#808080"/><rect x="570" y="444" width="2" height="1" fill="#808080"/><rect x="50" y="434" width="1" height="1" fill="#808080"/><rect x="570" y="434" width="2" height="1" fill="#808080"/><rect x="48" y="424" width="3" height="1" fill="#808080"/><rect x="570" y="424" width="4" height="1" fill="#808080"/><rect x="50" y="415" width="1" height="1" fill="#808080"/><rect x="570" y="415" width="2" height="1" fill="#808080"/><rect x="50" y="405" width="1" height="1" fill="#808080"/><rect x="570" y="405" width="2" height="1" fill="#808080"/><rect x="50" y="395" width="1" height="1" fill="#808080"/><rect x="570" y="395" width="2" height="1" fill="#808080"/><rect x="48" y="386" width="3" height="1" fill="#808080"/><rect x="570" y="386" width="4" height="1" fill="#808080"/><rect x="50" y="376" width="1" height="1" fill="#808080"/><rect x="570" y="376" width="2" height="1" fill="#808080"/><rect x="50" y="366" width="1" height="1" fill="#808080"/><rect x="570" y="366" width="2" height="1" fill="#808080"/><rect x="50" y="357" width="1" height="1" fill="#808080"/><rect x="570" y="357" width="2" height="1" fill="#808080"/><rect x="48" y="347" width="3" height="1" fill="#808080"/><rect x="570" y="347" width="4" height="1" fill="#808080"/><rect x="48" y="503" width="3" height="1" fill="#808080"/><rect x="52" y="504" width="1" height="4" fill="#808080"/><rect x="82" y="504" width="1" height="4" fill="#808080"/><rect x="125" y="504" width="1" height="4" fill="#808080"/><rect x="170" y="504" width="1" height="4" fill="#808080"/><rect x="213" y="504" width="1" height="4" fill="#808080"/><rect x="257" y="504" width="1" height="4" fill="#808080"/><rect x="304" y="504" width="1" height="4" fill="#808080"/><rect x="354" y="504" width="1" height="4" fill="#808080"/><rect x="405" y="504" width="1" height="4" fill="#808080"/><rect x="456" y="504" width="1" height="4" fill="#808080"/><rect x="508" y="504" width="1" height="4" fill="#808080"/><rect x="560" y="504" width="1" height="4" fill="#808080"/><rect x="60" y="504" width="1" height="2" fill="#808080"/><rect x="67" y="504" width="1" height="2" fill="#808080"/><rect x="74" y="504" width="1" height="2" fill="#808080"/><rect x="89" y="504" width="1" height="2" fill="#808080"/><rect x="96" y="504" width="1" height="2" fill="#808080"/><rect x="104" y="504" width="1" height="2" fill="#808080"/><rect x="111" y="504" width="1" height="2" fill="#808080"/><rect x="118" y="504" width="1" height="2" fill="#808080"/><rect x="132" y="504" width="1" height="2" fill="#808080"/><rect x="140" y="504" width="1" height="2" fill="#808080"/><rect x="148" y="504" width="1" height="2" fill="#808080"/><rect x="155" y="504" width="1" height="2" fill="#808080"/><rect x="162" y="504" width="1" height="2" fill="#808080"/><rect x="177" y="504" width="1" height="2" fill="#808080"/><rect x="184" y="504" width="1" height="2" fill="#808080"/><rect x="192" y="504" width="1" height="2" fill="#808080"/><rect x="199" y="504" width="1" height="2" fill="#808080"/><rect x="206" y="504" width="1" height="2" fill="#808080"/><rect x="220" y="504" width="1" height="2" fill="#808080"/><rect x="228" y="504" width="1" height="2" fill="#808080"/><rect x="235" y="504" width="1" height="2" fill="#808080"/><rect x="242" y="504" width="1" height="2" fill="#808080"/><rect x="250" y="504" width="1" height="2" fill="#808080"/><rect x="265" y="504" width="1" height="2" fill="#808080"/><rect x="273" y="504" width="1" height="2" fill="#808080"/><rect x="280" y="504" width="1" height="2" fill="#808080"/><rect x="288" y="504" width="1" height="2" fill="#808080"/><rect x="296" y="504" width="1" height="2" fill="#808080"/><rect x="311" y="504" width="1" height="2" fill="#808080"/><rect x="318" y="504" width="1" height="2" fill="#808080"/><rect x="325" y="504" width="1" height="2" fill="#808080"/><rect x="333" y="504" width="1" height="2" fill="#808080"/><rect x="340" y="504" width="1" height="2" fill="#808080"/><rect x="347" y="504" width="1" height="2" fill="#808080"/><rect x="361" y="504" width="1" height="2" fill="#808080"/><rect x="369" y="504" width="1" height="2" fill="#808080"/><rect x="376" y="504" width="1" height="2" fill="#808080"/><rect x="383" y="504" width="1" height="2" fill="#808080"/><rect x="390" y="504" width="1" height="2" fill="#808080"/><rect x="398" y="504" width="1" height="2" fill="#808080"/><rect x="412" y="504" width="1" height="2" fill="#808080"/><rect x="420" y="504" width="1" height="2" fill="#808080"/><rect x="427" y="504" width="1" height="2" fill="#808080"/><rect x="434" y="504" width="1" height="2" fill="#808080"/><rect x="441" y="504" width="1" height="2" fill="#808080"/><rect x="449" y="504" width="1" height="2" fill="#808080"/><rect x="463" y="504" width="1" height="2" fill="#808080"/><rect x="471" y="504" width="1" height="2" fill="#808080"/><rect x="478" y="504" width="1" height="2" fill="#808080"/><rect x="486" y="504" width="1" height="2" fill="#808080"/><rect x="493" y="504" width="1" height="2" fill="#808080"/><rect x="501" y="504" width="1" height="2" fill="#808080"/><rect x="515" y="504" width="1" height="2" fill="#808080"/><rect x="523" y="504" width="1" height="2" fill="#808080"/><rect x="530" y="504" width="1" height="2" fill="#808080"/><rect x="538" y="504" width="1" height="2" fill="#808080"/><rect x="545" y="504" width="1" height="2" fill="#808080"/><rect x="553" y="504" width="1" height="2" fill="#808080"/></svg>
<div class="t" style="left:40.00px;top:496.00px;color:#000;font:normal 13px 'Liberation Sans';line-height:13px;letter-spacing:0.000px;transform:scale(0.7143,1.0);transform-origin:0 0;">0</div>
<div class="t" style="left:575.00px;top:496.00px;color:#000;font:normal 13px 'Liberation Sans';line-height:13px;letter-spacing:0.000px;transform:scale(0.7143,1.0);transform-origin:0 0;">0</div>
<div class="t" style="left:39.00px;top:457.00px;color:#000;font:normal 13px 'Liberation Sans';line-height:13px;letter-spacing:0.000px;transform:scale(0.8929,1.0);transform-origin:0 0;">1</div>
<div class="t" style="left:574.00px;top:457.00px;color:#000;font:normal 13px 'Liberation Sans';line-height:13px;letter-spacing:0.000px;transform:scale(0.8929,1.0);transform-origin:0 0;">1</div>
<div class="t" style="left:40.00px;top:418.00px;color:#000;font:normal 13px 'Liberation Sans';line-height:13px;letter-spacing:0.000px;transform:scale(0.7143,1.0);transform-origin:0 0;">2</div>
<div class="t" style="left:575.00px;top:418.00px;color:#000;font:normal 13px 'Liberation Sans';line-height:13px;letter-spacing:0.000px;transform:scale(0.7143,1.0);transform-origin:0 0;">2</div>
<div class="t" style="left:39.00px;top:379.00px;color:#000;font:normal 13px 'Liberation Sans';line-height:13px;letter-spacing:0.000px;transform:scale(0.8929,1.0);transform-origin:0 0;">3</div>
<div class="t" style="left:574.00px;top:379.00px;color:#000;font:normal 13px 'Liberation Sans';line-height:13px;letter-spacing:0.000px;transform:scale(0.8929,1.0);transform-origin:0 0;">3</div>
<div class="t" style="left:40.00px;top:340.00px;color:#000;font:normal 13px 'Liberation Sans';line-height:13px;letter-spacing:0.000px;transform:scale(0.7143,1.0);transform-origin:0 0;">4</div>
<div class="t" style="left:575.00px;top:340.00px;color:#000;font:normal 13px 'Liberation Sans';line-height:13px;letter-spacing:0.000px;transform:scale(0.7143,1.0);transform-origin:0 0;">4</div>
<div class="t" style="left:42.00px;top:508.00px;color:#000;font:normal 13px 'Liberation Sans';line-height:13px;letter-spacing:0.000px;transform:scale(0.8417,1.0);transform-origin:0 0;">14h</div>
<div class="t" style="left:62.90px;top:508.00px;color:#000;font:normal 13px 'Liberation Sans';line-height:13px;letter-spacing:0.000px;transform:scale(0.8350,1.0);transform-origin:0 0;">20016h</div>
<div class="t" style="left:106.50px;top:508.00px;color:#000;font:normal 13px 'Liberation Sans';line-height:13px;letter-spacing:0.000px;transform:scale(0.7849,1.0);transform-origin:0 0;">4E169h</div>
<div class="t" style="left:150.30px;top:508.00px;color:#000;font:normal 13px 'Liberation Sans';line-height:13px;letter-spacing:0.000px;transform:scale(0.7995,1.0);transform-origin:0 0;">7EE11h</div>
<div class="t" style="left:194.58px;top:508.00px;color:#000;font:normal 13px 'Liberation Sans';line-height:13px;letter-spacing:0.000px;transform:scale(0.8218,1.0);transform-origin:0 0;">B5011h</div>
<div class="t" style="left:238.72px;top:508.00px;color:#000;font:normal 13px 'Liberation Sans';line-height:13px;letter-spacing:0.000px;transform:scale(0.8001,1.0);transform-origin:0 0;">E5E03h</div>
<div class="t" style="left:282.00px;top:508.00px;color:#000;font:normal 13px 'Liberation Sans';line-height:13px;letter-spacing:0.000px;transform:scale(0.8342,1.0);transform-origin:0 0;">121041h</div>
<div class="t" style="left:331.50px;top:508.00px;color:#000;font:normal 13px 'Liberation Sans';line-height:13px;letter-spacing:0.000px;transform:scale(0.8110,1.0);transform-origin:0 0;">151E26h</div>
<div class="t" style="left:382.00px;top:508.00px;color:#000;font:normal 13px 'Liberation Sans';line-height:13px;letter-spacing:0.000px;transform:scale(0.8342,1.0);transform-origin:0 0;">180085h</div>
<div class="t" style="left:433.50px;top:508.00px;color:#000;font:normal 13px 'Liberation Sans';line-height:13px;letter-spacing:0.000px;transform:scale(0.8110,1.0);transform-origin:0 0;">1B5021h</div>
<div class="t" style="left:485.90px;top:508.00px;color:#000;font:normal 13px 'Liberation Sans';line-height:13px;letter-spacing:0.000px;transform:scale(0.7682,1.0);transform-origin:0 0;">1EBE34h</div>
<div class="t" style="left:537.80px;top:508.00px;color:#000;font:normal 13px 'Liberation Sans';line-height:13px;letter-spacing:0.000px;transform:scale(0.8342,1.0);transform-origin:0 0;">224924h</div>
<div class="t" style="left:254.00px;top:331.00px;color:#000080;font:bold 11px 'Liberation Sans';line-height:11px;letter-spacing:0.596px;transform:scale(1.1200,1.0);transform-origin:0 0;text-shadow:0.35px 0 0 currentColor;">PO (Parity Outer)</div>
<div style="left:610px;top:105px;width:168px;height:1px;background:#aca899"></div>
<div style="left:610px;top:105px;width:1px;height:351px;background:#aca899"></div>
<div style="left:611px;top:106px;width:166px;height:1px;background:#fff"></div>
<div style="left:611px;top:106px;width:1px;height:349px;background:#fff"></div>
<div style="left:610px;top:455px;width:168px;height:1px;background:#aca899"></div>
<div style="left:777px;top:105px;width:1px;height:351px;background:#aca899"></div>
<div style="left:611px;top:456px;width:168px;height:1px;background:#fff"></div>
<div style="left:778px;top:106px;width:1px;height:351px;background:#fff"></div>
<div style="left:610px;top:200px;width:168px;height:1px;background:#aca899"></div>
<div style="left:611px;top:201px;width:166px;height:1px;background:#fff"></div>
<div style="left:610px;top:343px;width:168px;height:1px;background:#aca899"></div>
<div style="left:611px;top:344px;width:166px;height:1px;background:#fff"></div>
<div style="left:610px;top:462px;width:168px;height:1px;background:#aca899"></div>
<div style="left:610px;top:462px;width:1px;height:67px;background:#aca899"></div>
<div style="left:611px;top:463px;width:166px;height:1px;background:#fff"></div>
<div style="left:611px;top:463px;width:1px;height:65px;background:#fff"></div>
<div style="left:610px;top:528px;width:168px;height:1px;background:#aca899"></div>
<div style="left:777px;top:462px;width:1px;height:67px;background:#aca899"></div>
<div style="left:611px;top:529px;width:168px;height:1px;background:#fff"></div>
<div style="left:778px;top:463px;width:1px;height:67px;background:#fff"></div>
<div style="left:618px;top:111px;width:153px;height:21px;background:#000"></div>
<div style="left:619px;top:112px;width:151px;height:19px;background:#fff"></div>
<div style="left:621px;top:114px;width:130px;height:15px;background:#316ac5"></div>
<div style="left:621px;top:114px;width:130px;height:15px;background:repeating-linear-gradient(to right,#000 0 1px,#f0a030 1px 2px);-webkit-mask:none"></div>
<div style="left:622px;top:115px;width:128px;height:13px;background:#316ac5"></div>
<div style="left:621px;top:114px;width:1px;height:15px;background:repeating-linear-gradient(to bottom,#000 0 1px,#f0a030 1px 2px)"></div>
<div style="left:750px;top:114px;width:1px;height:15px;background:repeating-linear-gradient(to bottom,#000 0 1px,#f0a030 1px 2px)"></div>
<div style="left:752px;top:111px;width:1px;height:21px;background:#000"></div>
<div style="left:753px;top:112px;width:17px;height:19px;background:#fff"></div>
<div style="left:754px;top:113px;width:15px;height:17px;background:#d4d4ea"></div>
<svg style="left:757.5px;top:119.0px" width="8" height="5" viewBox="0 0 8 5"><path d="M0 0h8L4 4.5z" fill="#000"/></svg>
<div class="t" style="left:623.00px;top:118.00px;color:#fff;font:bold 12px 'Liberation Mono';line-height:12px;letter-spacing:0.549px;text-shadow:0.35px 0 0 currentColor;">C1C2/PIPO</div>
<div style="left:618px;top:137px;width:12px;height:12px;background:#fff"></div>
<div style="left:618px;top:137px;width:12px;height:1px;background:#aca899"></div>
<div style="left:618px;top:137px;width:1px;height:12px;background:#aca899"></div>
<div style="left:619px;top:138px;width:10px;height:1px;background:#716f64"></div>
<div style="left:619px;top:138px;width:1px;height:10px;background:#716f64"></div>
<div style="left:619px;top:147px;width:10px;height:1px;background:#f1efe2"></div>
<div style="left:628px;top:138px;width:1px;height:10px;background:#f1efe2"></div>
<svg style="left:618px;top:137px" width="12" height="12" viewBox="0 0 12 12" shape-rendering="crispEdges"><path d="M9 3h1v1h-1zM8 4h1v1h-1zM9 4h1v1h-1zM3 5h1v1h-1zM7 5h1v1h-1zM8 5h1v1h-1zM9 5h1v1h-1zM3 6h1v1h-1zM4 6h1v1h-1zM6 6h1v1h-1zM7 6h1v1h-1zM8 6h1v1h-1zM3 7h1v1h-1zM4 7h1v1h-1zM5 7h1v1h-1zM6 7h1v1h-1zM7 7h1v1h-1zM4 8h1v1h-1zM5 8h1v1h-1zM6 8h1v1h-1zM5 9h1v1h-1z" fill="#000"/></svg>
<div class="t" style="left:637.00px;top:138.00px;color:#000080;font:bold 11px 'Liberation Sans';line-height:11px;letter-spacing:0.596px;transform:scale(1.1200,1.0);transform-origin:0 0;text-shadow:0.35px 0 0 currentColor;">Realtime Chart</div>
<div class="t" style="left:618.00px;top:157.00px;color:#000;font:bold 11px 'Liberation Sans';line-height:11px;letter-spacing:0.409px;transform:scale(1.1200,1.0);transform-origin:0 0;text-shadow:0.35px 0 0 currentColor;">Speed</div>
<div style="left:664px;top:154px;width:34px;height:17px;background:#000"></div>
<div style="left:665px;top:155px;width:32px;height:15px;background:#fff"></div>
<div class="t" style="left:667.00px;top:159.00px;color:#000080;font:bold 11px 'Liberation Sans';line-height:11px;letter-spacing:0.000px;transform:scale(1.1200,1.0);transform-origin:0 0;text-shadow:0.35px 0 0 currentColor;">2</div>
<div class="t" style="left:701.00px;top:157.00px;color:#000;font:bold 11px 'Liberation Sans';line-height:11px;letter-spacing:0.000px;transform:scale(1.1200,1.0);transform-origin:0 0;text-shadow:0.35px 0 0 currentColor;">X</div>
<div style="left:722px;top:156px;width:12px;height:12px;background:#fff"></div>
<div style="left:722px;top:156px;width:12px;height:1px;background:#aca899"></div>
<div style="left:722px;top:156px;width:1px;height:12px;background:#aca899"></div>
<div style="left:723px;top:157px;width:10px;height:1px;background:#716f64"></div>
<div style="left:723px;top:157px;width:1px;height:10px;background:#716f64"></div>
<div style="left:723px;top:166px;width:10px;height:1px;background:#f1efe2"></div>
<div style="left:732px;top:157px;width:1px;height:10px;background:#f1efe2"></div>
<div class="t" style="left:741.00px;top:157.00px;color:#000080;font:bold 11px 'Liberation Sans';line-height:11px;letter-spacing:0.928px;transform:scale(1.0772,1.0);transform-origin:0 0;text-shadow:0.35px 0 0 currentColor;">Max</div>
<div class="t" style="left:618.00px;top:181.00px;color:#000;font:bold 11px 'Liberation Sans';line-height:11px;letter-spacing:0.756px;transform:scale(1.1200,1.0);transform-origin:0 0;text-shadow:0.35px 0 0 currentColor;">PI/PO Sum</div>
<div style="left:694px;top:175px;width:45px;height:21px;background:#000"></div>
<div style="left:695px;top:176px;width:43px;height:19px;background:#fff"></div>
<div style="left:720px;top:175px;width:1px;height:21px;background:#000"></div>
<div style="left:721px;top:176px;width:17px;height:19px;background:#fff"></div>
<div style="left:722px;top:177px;width:15px;height:17px;background:#d4d4ea"></div>
<svg style="left:725.5px;top:183.0px" width="8" height="5" viewBox="0 0 8 5"><path d="M0 0h8L4 4.5z" fill="#000"/></svg>
<div class="t" style="left:698.00px;top:181.00px;color:#000;font:bold 11px 'Liberation Sans';line-height:11px;letter-spacing:0.000px;transform:scale(1.1200,1.0);transform-origin:0 0;text-shadow:0.35px 0 0 currentColor;">1</div>
<div class="t" style="left:745.00px;top:181.00px;color:#000;font:bold 11px 'Liberation Sans';line-height:11px;letter-spacing:0.529px;transform:scale(0.9450,1.0);transform-origin:0 0;text-shadow:0.35px 0 0 currentColor;">ECC</div>
<svg style="left:619px;top:206px" width="12" height="12" shape-rendering="crispEdges"><rect x="4" y="0" width="1" height="1" fill="#aca899"/><rect x="5" y="0" width="1" height="1" fill="#aca899"/><rect x="6" y="0" width="1" height="1" fill="#aca899"/><rect x="7" y="0" width="1" height="1" fill="#aca899"/><rect x="2" y="1" width="1" height="1" fill="#aca899"/><rect x="3" y="1" width="1" height="1" fill="#aca899"/><rect x="4" y="1" width="1" height="1" fill="#716f64"/><rect x="5" y="1" width="1" height="1" fill="#716f64"/><rect x="6" y="1" width="1" height="1" fill="#716f64"/><rect x="7" y="1" width="1" height="1" fill="#716f64"/><rect x="8" y="1" width="1" height="1" fill="#aca899"/><rect x="9" y="1" width="1" height="1" fill="#aca899"/><rect x="1" y="2" width="1" height="1" fill="#aca899"/><rect x="2" y="2" width="1" height="1" fill="#716f64"/><rect x="3" y="2" width="1" height="1" fill="#716f64"/><rect x="4" y="2" width="1" height="1" fill="#ffffff"/><rect x="5" y="2" width="1" height="1" fill="#ffffff"/><rect x="6" y="2" width="1" height="1" fill="#ffffff"/><rect x="7" y="2" width="1" height="1" fill="#ffffff"/><rect x="8" y="2" width="1" height="1" fill="#716f64"/><rect x="9" y="2" width="1" height="1" fill="#716f64"/><rect x="10" y="2" width="1" height="1" fill="#f1efe2"/><rect x="1" y="3" width="1" height="1" fill="#aca899"/><rect x="2" y="3" width="1" height="1" fill="#716f64"/><rect x="3" y="3" width="1" height="1" fill="#ffffff"/><rect x="4" y="3" width="1" height="1" fill="#ffffff"/><rect x="5" y="3" width="1" height="1" fill="#ffffff"/><rect x="6" y="3" width="1" height="1" fill="#ffffff"/><rect x="7" y="3" width="1" height="1" fill="#ffffff"/><rect x="8" y="3" width="1" height="1" fill="#ffffff"/><rect x="9" y="3" width="1" height="1" fill="#f1efe2"/><rect x="10" y="3" width="1" height="1" fill="#ffffff"/><rect x="0" y="4" width="1" height="1" fill="#aca899"/><rect x="1" y="4" width="1" height="1" fill="#716f64"/><rect x="2" y="4" width="1" height="1" fill="#ffffff"/><rect x="3" y="4" width="1" height="1" fill="#ffffff"/><rect x="4" y="4" width="1" height="1" fill="#ffffff"/><rect x="5" y="4" width="1" height="1" fill="#ffffff"/><rect x="6" y="4" width="1" height="1" fill="#ffffff"/><rect x="7" y="4" width="1" height="1" fill="#ffffff"/><rect x="8" y="4" width="1" height="1" fill="#ffffff"/><rect x="9" y="4" width="1" height="1" fill="#ffffff"/><rect x="10" y="4" width="1" height="1" fill="#f1efe2"/><rect x="11" y="4" width="1" height="1" fill="#ffffff"/><rect x="0" y="5" width="1" height="1" fill="#aca899"/><rect x="1" y="5" width="1" height="1" fill="#716f64"/><rect x="2" y="5" width="1" height="1" fill="#ffffff"/><rect x="3" y="5" width="1" height="1" fill="#ffffff"/><rect x="4" y="5" width="1" height="1" fill="#ffffff"/><rect x="5" y="5" width="1" height="1" fill="#ffffff"/><rect x="6" y="5" width="1" height="1" fill="#ffffff"/><rect x="7" y="5" width="1" height="1" fill="#ffffff"/><rect x="8" y="5" width="1" height="1" fill="#ffffff"/><rect x="9" y="5" width="1" height="1" fill="#ffffff"/><rect x="10" y="5" width="1" height="1" fill="#f1efe2"/><rect x="11" y="5" width="1" height="1" fill="#ffffff"/><rect x="0" y="6" width="1" height="1" fill="#aca899"/><rect x="1" y="6" width="1" height="1" fill="#716f64"/><rect x="2" y="6" width="1" height="1" fill="#ffffff"/><rect x="3" y="6" width="1" height="1" fill="#ffffff"/><rect x="4" y="6" width="1" height="1" fill="#ffffff"/><rect x="5" y="6" width="1" height="1" fill="#ffffff"/><rect x="6" y="6" width="1" height="1" fill="#ffffff"/><rect x="7" y="6" width="1" height="1" fill="#ffffff"/><rect x="8" y="6" width="1" height="1" fill="#ffffff"/><rect x="9" y="6" width="1" height="1" fill="#ffffff"/><rect x="10" y="6" width="1" height="1" fill="#f1efe2"/><rect x="11" y="6" width="1" height="1" fill="#ffffff"/><rect x="0" y="7" width="1" height="1" fill="#aca899"/><rect x="1" y="7" width="1" height="1" fill="#716f64"/><rect x="2" y="7" width="1" height="1" fill="#ffffff"/><rect x="3" y="7" width="1" height="1" fill="#ffffff"/><rect x="4" y="7" width="1" height="1" fill="#ffffff"/><rect x="5" y="7" width="1" height="1" fill="#ffffff"/><rect x="6" y="7" width="1" height="1" fill="#ffffff"/><rect x="7" y="7" width="1" height="1" fill="#ffffff"/><rect x="8" y="7" width="1" height="1" fill="#ffffff"/><rect x="9" y="7" width="1" height="1" fill="#ffffff"/><rect x="10" y="7" width="1" height="1" fill="#f1efe2"/><rect x="11" y="7" width="1" height="1" fill="#ffffff"/><rect x="1" y="8" width="1" height="1" fill="#aca899"/><rect x="2" y="8" width="1" height="1" fill="#f1efe2"/><rect x="3" y="8" width="1" height="1" fill="#ffffff"/><rect x="4" y="8" width="1" height="1" fill="#ffffff"/><rect x="5" y="8" width="1" height="1" fill="#ffffff"/><rect x="6" y="8" width="1" height="1" fill="#ffffff"/><rect x="7" y="8" width="1" height="1" fill="#ffffff"/><rect x="8" y="8" width="1" height="1" fill="#ffffff"/><rect x="9" y="8" width="1" height="1" fill="#f1efe2"/><rect x="10" y="8" width="1" height="1" fill="#ffffff"/><rect x="1" y="9" width="1" height="1" fill="#ffffff"/><rect x="2" y="9" width="1" height="1" fill="#f1efe2"/><rect x="3" y="9" width="1" height="1" fill="#f1efe2"/><rect x="4" y="9" width="1" height="1" fill="#ffffff"/><rect x="5" y="9" width="1" height="1" fill="#ffffff"/><rect x="6" y="9" width="1" height="1" fill="#ffffff"/><rect x="7" y="9" width="1" height="1" fill="#ffffff"/><rect x="8" y="9" width="1" height="1" fill="#f1efe2"/><rect x="9" y="9" width="1" height="1" fill="#f1efe2"/><rect x="10" y="9" width="1" height="1" fill="#ffffff"/><rect x="2" y="10" width="1" height="1" fill="#ffffff"/><rect x="3" y="10" width="1" height="1" fill="#ffffff"/><rect x="4" y="10" width="1" height="1" fill="#f1efe2"/><rect x="5" y="10" width="1" height="1" fill="#f1efe2"/><rect x="6" y="10" width="1" height="1" fill="#f1efe2"/><rect x="7" y="10" width="1" height="1" fill="#f1efe2"/><rect x="8" y="10" width="1" height="1" fill="#ffffff"/><rect x="9" y="10" width="1" height="1" fill="#ffffff"/><rect x="4" y="11" width="1" height="1" fill="#ffffff"/><rect x="5" y="11" width="1" height="1" fill="#ffffff"/><rect x="6" y="11" width="1" height="1" fill="#ffffff"/><rect x="7" y="11" width="1" height="1" fill="#ffffff"/></svg>
<div class="t" style="left:637.00px;top:207.00px;color:#000080;font:bold 11px 'Liberation Sans';line-height:11px;letter-spacing:0.490px;transform:scale(1.0213,1.0);transform-origin:0 0;text-shadow:0.35px 0 0 currentColor;">MSF</div>
<div class="t" style="left:631.00px;top:225.00px;color:#000;font:bold 11px 'Liberation Sans';line-height:11px;letter-spacing:0.793px;transform:scale(1.1200,1.0);transform-origin:0 0;text-shadow:0.35px 0 0 currentColor;">Start</div>
<div class="t" style="left:639.00px;top:245.00px;color:#000;font:bold 11px 'Liberation Sans';line-height:11px;letter-spacing:0.000px;transform:scale(1.0969,1.0);transform-origin:0 0;text-shadow:0.35px 0 0 currentColor;">End</div>
<div style="left:666px;top:222px;width:33px;height:17px;background:#000"></div>
<div style="left:667px;top:223px;width:31px;height:15px;background:#fff"></div>
<div style="left:666px;top:242px;width:33px;height:17px;background:#000"></div>
<div style="left:667px;top:243px;width:31px;height:15px;background:#fff"></div>
<div style="left:710px;top:222px;width:25px;height:17px;background:#000"></div>
<div style="left:711px;top:223px;width:23px;height:15px;background:#fff"></div>
<div style="left:710px;top:242px;width:25px;height:17px;background:#000"></div>
<div style="left:711px;top:243px;width:23px;height:15px;background:#fff"></div>
<div style="left:745px;top:222px;width:25px;height:17px;background:#000"></div>
<div style="left:746px;top:223px;width:23px;height:15px;background:#fff"></div>
<div style="left:745px;top:242px;width:25px;height:17px;background:#000"></div>
<div style="left:746px;top:243px;width:23px;height:15px;background:#fff"></div>
<div style="left:704px;top:229px;width:2px;height:2px;background:#000"></div>
<div style="left:704px;top:234px;width:2px;height:2px;background:#000"></div>
<div style="left:739px;top:229px;width:2px;height:2px;background:#000"></div>
<div style="left:739px;top:234px;width:2px;height:2px;background:#000"></div>
<div style="left:704px;top:249px;width:2px;height:2px;background:#000"></div>
<div style="left:704px;top:254px;width:2px;height:2px;background:#000"></div>
<div style="left:739px;top:249px;width:2px;height:2px;background:#000"></div>
<div style="left:739px;top:254px;width:2px;height:2px;background:#000"></div>
<div class="t" style="left:669.00px;top:226.00px;color:#000080;font:bold 11px 'Liberation Sans';line-height:11px;letter-spacing:0.382px;transform:scale(1.1200,1.0);transform-origin:0 0;text-shadow:0.35px 0 0 currentColor;">00</div>
<div class="t" style="left:713.00px;top:226.00px;color:#000080;font:bold 11px 'Liberation Sans';line-height:11px;letter-spacing:0.382px;transform:scale(1.1200,1.0);transform-origin:0 0;text-shadow:0.35px 0 0 currentColor;">02</div>
<div class="t" style="left:748.00px;top:226.00px;color:#000080;font:bold 11px 'Liberation Sans';line-height:11px;letter-spacing:0.382px;transform:scale(1.1200,1.0);transform-origin:0 0;text-shadow:0.35px 0 0 currentColor;">00</div>
<div class="t" style="left:668.00px;top:246.00px;color:#000080;font:bold 11px 'Liberation Sans';line-height:11px;letter-spacing:1.150px;transform:scale(1.1200,1.0);transform-origin:0 0;text-shadow:0.35px 0 0 currentColor;">508</div>
<div class="t" style="left:713.00px;top:246.00px;color:#000080;font:bold 11px 'Liberation Sans';line-height:11px;letter-spacing:0.382px;transform:scale(1.1200,1.0);transform-origin:0 0;text-shadow:0.35px 0 0 currentColor;">28</div>
<div class="t" style="left:747.00px;top:246.00px;color:#000080;font:bold 11px 'Liberation Sans';line-height:11px;letter-spacing:1.275px;transform:scale(1.1200,1.0);transform-origin:0 0;text-shadow:0.35px 0 0 currentColor;">56</div>
<svg style="left:619px;top:264px" width="12" height="12" shape-rendering="crispEdges"><rect x="4" y="0" width="1" height="1" fill="#aca899"/><rect x="5" y="0" width="1" height="1" fill="#aca899"/><rect x="6" y="0" width="1" height="1" fill="#aca899"/><rect x="7" y="0" width="1" height="1" fill="#aca899"/><rect x="2" y="1" width="1" height="1" fill="#aca899"/><rect x="3" y="1" width="1" height="1" fill="#aca899"/><rect x="4" y="1" width="1" height="1" fill="#716f64"/><rect x="5" y="1" width="1" height="1" fill="#716f64"/><rect x="6" y="1" width="1" height="1" fill="#716f64"/><rect x="7" y="1" width="1" height="1" fill="#716f64"/><rect x="8" y="1" width="1" height="1" fill="#aca899"/><rect x="9" y="1" width="1" height="1" fill="#aca899"/><rect x="1" y="2" width="1" height="1" fill="#aca899"/><rect x="2" y="2" width="1" height="1" fill="#716f64"/><rect x="3" y="2" width="1" height="1" fill="#716f64"/><rect x="4" y="2" width="1" height="1" fill="#ffffff"/><rect x="5" y="2" width="1" height="1" fill="#ffffff"/><rect x="6" y="2" width="1" height="1" fill="#ffffff"/><rect x="7" y="2" width="1" height="1" fill="#ffffff"/><rect x="8" y="2" width="1" height="1" fill="#716f64"/><rect x="9" y="2" width="1" height="1" fill="#716f64"/><rect x="10" y="2" width="1" height="1" fill="#f1efe2"/><rect x="1" y="3" width="1" height="1" fill="#aca899"/><rect x="2" y="3" width="1" height="1" fill="#716f64"/><rect x="3" y="3" width="1" height="1" fill="#ffffff"/><rect x="4" y="3" width="1" height="1" fill="#ffffff"/><rect x="5" y="3" width="1" height="1" fill="#ffffff"/><rect x="6" y="3" width="1" height="1" fill="#ffffff"/><rect x="7" y="3" width="1" height="1" fill="#ffffff"/><rect x="8" y="3" width="1" height="1" fill="#ffffff"/><rect x="9" y="3" width="1" height="1" fill="#f1efe2"/><rect x="10" y="3" width="1" height="1" fill="#ffffff"/><rect x="0" y="4" width="1" height="1" fill="#aca899"/><rect x="1" y="4" width="1" height="1" fill="#716f64"/><rect x="2" y="4" width="1" height="1" fill="#ffffff"/><rect x="3" y="4" width="1" height="1" fill="#ffffff"/><rect x="4" y="4" width="1" height="1" fill="#ffffff"/><rect x="5" y="4" width="1" height="1" fill="#ffffff"/><rect x="6" y="4" width="1" height="1" fill="#ffffff"/><rect x="7" y="4" width="1" height="1" fill="#ffffff"/><rect x="8" y="4" width="1" height="1" fill="#ffffff"/><rect x="9" y="4" width="1" height="1" fill="#ffffff"/><rect x="10" y="4" width="1" height="1" fill="#f1efe2"/><rect x="11" y="4" width="1" height="1" fill="#ffffff"/><rect x="0" y="5" width="1" height="1" fill="#aca899"/><rect x="1" y="5" width="1" height="1" fill="#716f64"/><rect x="2" y="5" width="1" height="1" fill="#ffffff"/><rect x="3" y="5" width="1" height="1" fill="#ffffff"/><rect x="4" y="5" width="1" height="1" fill="#ffffff"/><rect x="5" y="5" width="1" height="1" fill="#ffffff"/><rect x="6" y="5" width="1" height="1" fill="#ffffff"/><rect x="7" y="5" width="1" height="1" fill="#ffffff"/><rect x="8" y="5" width="1" height="1" fill="#ffffff"/><rect x="9" y="5" width="1" height="1" fill="#ffffff"/><rect x="10" y="5" width="1" height="1" fill="#f1efe2"/><rect x="11" y="5" width="1" height="1" fill="#ffffff"/><rect x="0" y="6" width="1" height="1" fill="#aca899"/><rect x="1" y="6" width="1" height="1" fill="#716f64"/><rect x="2" y="6" width="1" height="1" fill="#ffffff"/><rect x="3" y="6" width="1" height="1" fill="#ffffff"/><rect x="4" y="6" width="1" height="1" fill="#ffffff"/><rect x="5" y="6" width="1" height="1" fill="#ffffff"/><rect x="6" y="6" width="1" height="1" fill="#ffffff"/><rect x="7" y="6" width="1" height="1" fill="#ffffff"/><rect x="8" y="6" width="1" height="1" fill="#ffffff"/><rect x="9" y="6" width="1" height="1" fill="#ffffff"/><rect x="10" y="6" width="1" height="1" fill="#f1efe2"/><rect x="11" y="6" width="1" height="1" fill="#ffffff"/><rect x="0" y="7" width="1" height="1" fill="#aca899"/><rect x="1" y="7" width="1" height="1" fill="#716f64"/><rect x="2" y="7" width="1" height="1" fill="#ffffff"/><rect x="3" y="7" width="1" height="1" fill="#ffffff"/><rect x="4" y="7" width="1" height="1" fill="#ffffff"/><rect x="5" y="7" width="1" height="1" fill="#ffffff"/><rect x="6" y="7" width="1" height="1" fill="#ffffff"/><rect x="7" y="7" width="1" height="1" fill="#ffffff"/><rect x="8" y="7" width="1" height="1" fill="#ffffff"/><rect x="9" y="7" width="1" height="1" fill="#ffffff"/><rect x="10" y="7" width="1" height="1" fill="#f1efe2"/><rect x="11" y="7" width="1" height="1" fill="#ffffff"/><rect x="1" y="8" width="1" height="1" fill="#aca899"/><rect x="2" y="8" width="1" height="1" fill="#f1efe2"/><rect x="3" y="8" width="1" height="1" fill="#ffffff"/><rect x="4" y="8" width="1" height="1" fill="#ffffff"/><rect x="5" y="8" width="1" height="1" fill="#ffffff"/><rect x="6" y="8" width="1" height="1" fill="#ffffff"/><rect x="7" y="8" width="1" height="1" fill="#ffffff"/><rect x="8" y="8" width="1" height="1" fill="#ffffff"/><rect x="9" y="8" width="1" height="1" fill="#f1efe2"/><rect x="10" y="8" width="1" height="1" fill="#ffffff"/><rect x="1" y="9" width="1" height="1" fill="#ffffff"/><rect x="2" y="9" width="1" height="1" fill="#f1efe2"/><rect x="3" y="9" width="1" height="1" fill="#f1efe2"/><rect x="4" y="9" width="1" height="1" fill="#ffffff"/><rect x="5" y="9" width="1" height="1" fill="#ffffff"/><rect x="6" y="9" width="1" height="1" fill="#ffffff"/><rect x="7" y="9" width="1" height="1" fill="#ffffff"/><rect x="8" y="9" width="1" height="1" fill="#f1efe2"/><rect x="9" y="9" width="1" height="1" fill="#f1efe2"/><rect x="10" y="9" width="1" height="1" fill="#ffffff"/><rect x="2" y="10" width="1" height="1" fill="#ffffff"/><rect x="3" y="10" width="1" height="1" fill="#ffffff"/><rect x="4" y="10" width="1" height="1" fill="#f1efe2"/><rect x="5" y="10" width="1" height="1" fill="#f1efe2"/><rect x="6" y="10" width="1" height="1" fill="#f1efe2"/><rect x="7" y="10" width="1" height="1" fill="#f1efe2"/><rect x="8" y="10" width="1" height="1" fill="#ffffff"/><rect x="9" y="10" width="1" height="1" fill="#ffffff"/><rect x="4" y="11" width="1" height="1" fill="#ffffff"/><rect x="5" y="11" width="1" height="1" fill="#ffffff"/><rect x="6" y="11" width="1" height="1" fill="#ffffff"/><rect x="7" y="11" width="1" height="1" fill="#ffffff"/></svg>
<div class="t" style="left:637.00px;top:265.00px;color:#000080;font:bold 11px 'Liberation Sans';line-height:11px;letter-spacing:0.515px;transform:scale(0.9707,1.0);transform-origin:0 0;text-shadow:0.35px 0 0 currentColor;">LBA</div>
<div class="t" style="left:631.00px;top:283.00px;color:#000;font:bold 11px 'Liberation Sans';line-height:11px;letter-spacing:0.793px;transform:scale(1.1200,1.0);transform-origin:0 0;text-shadow:0.35px 0 0 currentColor;">Start</div>
<div style="left:666px;top:280px;width:73px;height:17px;background:#000"></div>
<div style="left:667px;top:281px;width:71px;height:15px;background:#fff"></div>
<div class="t" style="left:669.00px;top:285.00px;color:#000080;font:bold 11px 'Liberation Sans';line-height:11px;letter-spacing:0.000px;transform:scale(1.1200,1.0);transform-origin:0 0;text-shadow:0.35px 0 0 currentColor;">0</div>
<div class="t" style="left:742.00px;top:283.00px;color:#000;font:bold 11px 'Liberation Sans';line-height:11px;letter-spacing:0.000px;transform:scale(1.1200,1.0);transform-origin:0 0;text-shadow:0.35px 0 0 currentColor;">h</div>
<div class="t" style="left:639.00px;top:303.00px;color:#000;font:bold 11px 'Liberation Sans';line-height:11px;letter-spacing:0.000px;transform:scale(1.0969,1.0);transform-origin:0 0;text-shadow:0.35px 0 0 currentColor;">End</div>
<div style="left:666px;top:300px;width:73px;height:17px;background:#000"></div>
<div style="left:667px;top:301px;width:71px;height:15px;background:#fff"></div>
<div class="t" style="left:669.00px;top:304.00px;color:#000080;font:bold 11px 'Liberation Sans';line-height:11px;letter-spacing:0.653px;transform:scale(1.1200,1.0);transform-origin:0 0;text-shadow:0.35px 0 0 currentColor;">22E986</div>
<div class="t" style="left:742.00px;top:303.00px;color:#000;font:bold 11px 'Liberation Sans';line-height:11px;letter-spacing:0.000px;transform:scale(1.1200,1.0);transform-origin:0 0;text-shadow:0.35px 0 0 currentColor;">h</div>
<svg style="left:619px;top:326px" width="12" height="12" shape-rendering="crispEdges"><rect x="4" y="0" width="1" height="1" fill="#aca899"/><rect x="5" y="0" width="1" height="1" fill="#aca899"/><rect x="6" y="0" width="1" height="1" fill="#aca899"/><rect x="7" y="0" width="1" height="1" fill="#aca899"/><rect x="2" y="1" width="1" height="1" fill="#aca899"/><rect x="3" y="1" width="1" height="1" fill="#aca899"/><rect x="4" y="1" width="1" height="1" fill="#716f64"/><rect x="5" y="1" width="1" height="1" fill="#716f64"/><rect x="6" y="1" width="1" height="1" fill="#716f64"/><rect x="7" y="1" width="1" height="1" fill="#716f64"/><rect x="8" y="1" width="1" height="1" fill="#aca899"/><rect x="9" y="1" width="1" height="1" fill="#aca899"/><rect x="1" y="2" width="1" height="1" fill="#aca899"/><rect x="2" y="2" width="1" height="1" fill="#716f64"/><rect x="3" y="2" width="1" height="1" fill="#716f64"/><rect x="4" y="2" width="1" height="1" fill="#ffffff"/><rect x="5" y="2" width="1" height="1" fill="#ffffff"/><rect x="6" y="2" width="1" height="1" fill="#ffffff"/><rect x="7" y="2" width="1" height="1" fill="#ffffff"/><rect x="8" y="2" width="1" height="1" fill="#716f64"/><rect x="9" y="2" width="1" height="1" fill="#716f64"/><rect x="10" y="2" width="1" height="1" fill="#f1efe2"/><rect x="1" y="3" width="1" height="1" fill="#aca899"/><rect x="2" y="3" width="1" height="1" fill="#716f64"/><rect x="3" y="3" width="1" height="1" fill="#ffffff"/><rect x="4" y="3" width="1" height="1" fill="#ffffff"/><rect x="5" y="3" width="1" height="1" fill="#ffffff"/><rect x="6" y="3" width="1" height="1" fill="#ffffff"/><rect x="7" y="3" width="1" height="1" fill="#ffffff"/><rect x="8" y="3" width="1" height="1" fill="#ffffff"/><rect x="9" y="3" width="1" height="1" fill="#f1efe2"/><rect x="10" y="3" width="1" height="1" fill="#ffffff"/><rect x="0" y="4" width="1" height="1" fill="#aca899"/><rect x="1" y="4" width="1" height="1" fill="#716f64"/><rect x="2" y="4" width="1" height="1" fill="#ffffff"/><rect x="3" y="4" width="1" height="1" fill="#ffffff"/><rect x="4" y="4" width="1" height="1" fill="#ffffff"/><rect x="5" y="4" width="1" height="1" fill="#000"/><rect x="6" y="4" width="1" height="1" fill="#000"/><rect x="7" y="4" width="1" height="1" fill="#ffffff"/><rect x="8" y="4" width="1" height="1" fill="#ffffff"/><rect x="9" y="4" width="1" height="1" fill="#ffffff"/><rect x="10" y="4" width="1" height="1" fill="#f1efe2"/><rect x="11" y="4" width="1" height="1" fill="#ffffff"/><rect x="0" y="5" width="1" height="1" fill="#aca899"/><rect x="1" y="5" width="1" height="1" fill="#716f64"/><rect x="2" y="5" width="1" height="1" fill="#ffffff"/><rect x="3" y="5" width="1" height="1" fill="#ffffff"/><rect x="4" y="5" width="1" height="1" fill="#000"/><rect x="5" y="5" width="1" height="1" fill="#000"/><rect x="6" y="5" width="1" height="1" fill="#000"/><rect x="7" y="5" width="1" height="1" fill="#000"/><rect x="8" y="5" width="1" height="1" fill="#ffffff"/><rect x="9" y="5" width="1" height="1" fill="#ffffff"/><rect x="10" y="5" width="1" height="1" fill="#f1efe2"/><rect x="11" y="5" width="1" height="1" fill="#ffffff"/><rect x="0" y="6" width="1" height="1" fill="#aca899"/><rect x="1" y="6" width="1" height="1" fill="#716f64"/><rect x="2" y="6" width="1" height="1" fill="#ffffff"/><rect x="3" y="6" width="1" height="1" fill="#ffffff"/><rect x="4" y="6" width="1" height="1" fill="#000"/><rect x="5" y="6" width="1" height="1" fill="#000"/><rect x="6" y="6" width="1" height="1" fill="#000"/><rect x="7" y="6" width="1" height="1" fill="#000"/><rect x="8" y="6" width="1" height="1" fill="#ffffff"/><rect x="9" y="6" width="1" height="1" fill="#ffffff"/><rect x="10" y="6" width="1" height="1" fill="#f1efe2"/><rect x="11" y="6" width="1" height="1" fill="#ffffff"/><rect x="0" y="7" width="1" height="1" fill="#aca899"/><rect x="1" y="7" width="1" height="1" fill="#716f64"/><rect x="2" y="7" width="1" height="1" fill="#ffffff"/><rect x="3" y="7" width="1" height="1" fill="#ffffff"/><rect x="4" y="7" width="1" height="1" fill="#ffffff"/><rect x="5" y="7" width="1" height="1" fill="#000"/><rect x="6" y="7" width="1" height="1" fill="#000"/><rect x="7" y="7" width="1" height="1" fill="#ffffff"/><rect x="8" y="7" width="1" height="1" fill="#ffffff"/><rect x="9" y="7" width="1" height="1" fill="#ffffff"/><rect x="10" y="7" width="1" height="1" fill="#f1efe2"/><rect x="11" y="7" width="1" height="1" fill="#ffffff"/><rect x="1" y="8" width="1" height="1" fill="#aca899"/><rect x="2" y="8" width="1" height="1" fill="#f1efe2"/><rect x="3" y="8" width="1" height="1" fill="#ffffff"/><rect x="4" y="8" width="1" height="1" fill="#ffffff"/><rect x="5" y="8" width="1" height="1" fill="#ffffff"/><rect x="6" y="8" width="1" height="1" fill="#ffffff"/><rect x="7" y="8" width="1" height="1" fill="#ffffff"/><rect x="8" y="8" width="1" height="1" fill="#ffffff"/><rect x="9" y="8" width="1" height="1" fill="#f1efe2"/><rect x="10" y="8" width="1" height="1" fill="#ffffff"/><rect x="1" y="9" width="1" height="1" fill="#ffffff"/><rect x="2" y="9" width="1" height="1" fill="#f1efe2"/><rect x="3" y="9" width="1" height="1" fill="#f1efe2"/><rect x="4" y="9" width="1" height="1" fill="#ffffff"/><rect x="5" y="9" width="1" height="1" fill="#ffffff"/><rect x="6" y="9" width="1" height="1" fill="#ffffff"/><rect x="7" y="9" width="1" height="1" fill="#ffffff"/><rect x="8" y="9" width="1" height="1" fill="#f1efe2"/><rect x="9" y="9" width="1" height="1" fill="#f1efe2"/><rect x="10" y="9" width="1" height="1" fill="#ffffff"/><rect x="2" y="10" width="1" height="1" fill="#ffffff"/><rect x="3" y="10" width="1" height="1" fill="#ffffff"/><rect x="4" y="10" width="1" height="1" fill="#f1efe2"/><rect x="5" y="10" width="1" height="1" fill="#f1efe2"/><rect x="6" y="10" width="1" height="1" fill="#f1efe2"/><rect x="7" y="10" width="1" height="1" fill="#f1efe2"/><rect x="8" y="10" width="1" height="1" fill="#ffffff"/><rect x="9" y="10" width="1" height="1" fill="#ffffff"/><rect x="4" y="11" width="1" height="1" fill="#ffffff"/><rect x="5" y="11" width="1" height="1" fill="#ffffff"/><rect x="6" y="11" width="1" height="1" fill="#ffffff"/><rect x="7" y="11" width="1" height="1" fill="#ffffff"/></svg>
<div class="t" style="left:637.00px;top:327.00px;color:#000080;font:bold 11px 'Liberation Sans';line-height:11px;letter-spacing:0.339px;transform:scale(1.1200,1.0);transform-origin:0 0;text-shadow:0.35px 0 0 currentColor;">Disc Size</div>
<div class="t" style="left:635.00px;top:349.00px;color:#000080;font:bold 11px 'Liberation Sans';line-height:11px;letter-spacing:1.093px;transform:scale(1.1200,1.0);transform-origin:0 0;text-shadow:0.35px 0 0 currentColor;">Max.</div>
<div style="left:636px;top:359px;width:30px;height:1px;background:#000080"></div>
<div class="t" style="left:671.00px;top:349.00px;color:#000080;font:bold 11px 'Liberation Sans';line-height:11px;letter-spacing:1.015px;transform:scale(1.1200,1.0);transform-origin:0 0;text-shadow:0.35px 0 0 currentColor;">Total</div>
<div style="left:671px;top:359px;width:33px;height:1px;background:#000080"></div>
<div class="t" style="left:722.00px;top:349.00px;color:#000080;font:bold 11px 'Liberation Sans';line-height:11px;letter-spacing:0.888px;transform:scale(1.1200,1.0);transform-origin:0 0;text-shadow:0.35px 0 0 currentColor;">Avg</div>
<div style="left:722px;top:359px;width:25px;height:1px;background:#000080"></div>
<div class="t" style="left:615.00px;top:365.00px;color:#000;font:bold 11px 'Liberation Sans';line-height:11px;letter-spacing:1.270px;transform:scale(1.1200,1.0);transform-origin:0 0;text-shadow:0.35px 0 0 currentColor;">PI</div>
<div class="t" style="left:637.00px;top:365.00px;color:#800080;font:normal 11px 'Liberation Sans';line-height:11px;letter-spacing:0.000px;">8</div>
<div class="t" style="left:673.00px;top:365.00px;color:#800080;font:normal 11px 'Liberation Sans';line-height:11px;letter-spacing:0.632px;">45662</div>
<div class="t" style="left:722.00px;top:365.00px;color:#800080;font:normal 11px 'Liberation Sans';line-height:11px;letter-spacing:0.648px;">1.155</div>
<div class="t" style="left:615.00px;top:381.00px;color:#000;font:bold 11px 'Liberation Sans';line-height:11px;letter-spacing:1.089px;transform:scale(0.9182,1.0);transform-origin:0 0;text-shadow:0.35px 0 0 currentColor;">PO</div>
<div class="t" style="left:638.00px;top:381.00px;color:#ff0000;font:normal 11px 'Liberation Sans';line-height:11px;letter-spacing:0.000px;">4</div>
<div class="t" style="left:672.00px;top:381.00px;color:#ff0000;font:normal 11px 'Liberation Sans';line-height:11px;letter-spacing:0.882px;">33938</div>
<div class="t" style="left:723.00px;top:381.00px;color:#ff0000;font:normal 11px 'Liberation Sans';line-height:11px;letter-spacing:0.398px;">0.858</div>
<div class="t" style="left:619.00px;top:396.00px;color:#000;font:bold 11px 'Liberation Sans';line-height:11px;letter-spacing:0.323px;transform:scale(1.1200,1.0);transform-origin:0 0;text-shadow:0.35px 0 0 currentColor;">Current Spd</div>
<div class="t" style="left:708.00px;top:396.00px;color:#000080;font:bold 11px 'Liberation Sans';line-height:11px;letter-spacing:0.343px;transform:scale(1.1200,1.0);transform-origin:0 0;text-shadow:0.35px 0 0 currentColor;">2.01</div>
<div class="t" style="left:747.00px;top:396.00px;color:#000080;font:bold 11px 'Liberation Sans';line-height:11px;letter-spacing:0.000px;transform:scale(1.1200,1.0);transform-origin:0 0;text-shadow:0.35px 0 0 currentColor;">X</div>
<div class="t" style="left:619.00px;top:410.00px;color:#000;font:bold 11px 'Liberation Sans';line-height:11px;letter-spacing:0.247px;transform:scale(1.1200,1.0);transform-origin:0 0;text-shadow:0.35px 0 0 currentColor;">Current MSF</div>
<div class="t" style="left:708.00px;top:410.00px;color:#000080;font:bold 11px 'Liberation Sans';line-height:11px;letter-spacing:0.614px;transform:scale(1.1200,1.0);transform-origin:0 0;text-shadow:0.35px 0 0 currentColor;">00:00:00</div>
<div class="t" style="left:619.00px;top:423.00px;color:#000;font:bold 11px 'Liberation Sans';line-height:11px;letter-spacing:0.152px;transform:scale(1.1200,1.0);transform-origin:0 0;text-shadow:0.35px 0 0 currentColor;">Current LBA</div>
<div class="t" style="left:708.00px;top:423.00px;color:#000080;font:bold 11px 'Liberation Sans';line-height:11px;letter-spacing:0.697px;transform:scale(1.1200,1.0);transform-origin:0 0;text-shadow:0.35px 0 0 currentColor;">22E969h</div>
<div style="left:618px;top:438px;width:152px;height:12px;background:#808070"></div>
<div style="left:619px;top:439px;width:150px;height:10px;background:#eeeeee"></div>
<div style="left:619px;top:439px;width:148px;height:10px;background:linear-gradient(to bottom,#8ab0e6 0,#94b8e8 30%,#3a7fe0 40%,#5a9cf0 60%,#8cd4fa 100%)"></div>
<div class="t" style="left:684.00px;top:436.00px;color:#000;font:normal 13px 'Liberation Sans';line-height:13px;letter-spacing:0.000px;transform:scale(0.7627,1.0);transform-origin:0 0;">99%</div>
<div style="left:618px;top:468px;width:33px;height:23px;background:#003c74;border-radius:3px"></div>
<div style="left:619px;top:469px;width:31px;height:21px;background:linear-gradient(to bottom,#fefefe 0,#f6f6f3 40%,#eeede6 85%,#dcd8c8 100%);border-radius:2px"></div>
<div style="left:650px;top:468px;width:33px;height:23px;background:#003c74;border-radius:3px"></div>
<div style="left:651px;top:469px;width:31px;height:21px;background:linear-gradient(to bottom,#fefefe 0,#f6f6f3 40%,#eeede6 85%,#dcd8c8 100%);border-radius:2px"></div>
<div style="left:682px;top:468px;width:33px;height:23px;background:#003c74;border-radius:3px"></div>
<div style="left:683px;top:469px;width:31px;height:21px;background:linear-gradient(to bottom,#fefefe 0,#f6f6f3 40%,#eeede6 85%,#dcd8c8 100%);border-radius:2px"></div>
<div style="left:618px;top:498px;width:73px;height:25px;background:#003c74;border-radius:3px"></div>
<div style="left:619px;top:499px;width:71px;height:23px;background:linear-gradient(to bottom,#fefefe 0,#f6f6f3 40%,#eeede6 85%,#dcd8c8 100%);border-radius:2px"></div>
<div style="left:698px;top:498px;width:73px;height:25px;background:#003c74;border-radius:3px"></div>
<div style="left:699px;top:499px;width:71px;height:23px;background:linear-gradient(to bottom,#fefefe 0,#f6f6f3 40%,#eeede6 85%,#dcd8c8 100%);border-radius:2px"></div>
<div class="t" style="left:639.00px;top:505.00px;color:#808080;font:bold 11px 'Liberation Sans';line-height:11px;letter-spacing:0.391px;transform:scale(1.1200,1.0);transform-origin:0 0;text-shadow:0.35px 0 0 currentColor;">Stop</div>
<div class="t" style="left:718.00px;top:505.00px;color:#000;font:bold 11px 'Liberation Sans';line-height:11px;letter-spacing:1.016px;transform:scale(1.1200,1.0);transform-origin:0 0;text-shadow:0.35px 0 0 currentColor;">Start</div>
<svg style="left:626px;top:472px" width="16" height="14" shape-rendering="crispEdges"><rect x="5" y="0" width="1" height="1" fill="#000"/><rect x="6" y="0" width="1" height="1" fill="#000"/><rect x="7" y="0" width="1" height="1" fill="#000"/><rect x="8" y="0" width="1" height="1" fill="#000"/><rect x="9" y="0" width="1" height="1" fill="#000"/><rect x="10" y="0" width="1" height="1" fill="#000"/><rect x="11" y="0" width="1" height="1" fill="#000"/><rect x="12" y="0" width="1" height="1" fill="#000"/><rect x="13" y="0" width="1" height="1" fill="#000"/><rect x="4" y="1" width="1" height="1" fill="#000"/><rect x="5" y="1" width="1" height="1" fill="#fff"/><rect x="6" y="1" width="1" height="1" fill="#fff"/><rect x="7" y="1" width="1" height="1" fill="#fff"/><rect x="8" y="1" width="1" height="1" fill="#fff"/><rect x="9" y="1" width="1" height="1" fill="#fff"/><rect x="10" y="1" width="1" height="1" fill="#fff"/><rect x="11" y="1" width="1" height="1" fill="#fff"/><rect x="12" y="1" width="1" height="1" fill="#fff"/><rect x="13" y="1" width="1" height="1" fill="#000"/><rect x="4" y="2" width="1" height="1" fill="#000"/><rect x="5" y="2" width="1" height="1" fill="#fff"/><rect x="6" y="2" width="1" height="1" fill="#000"/><rect x="7" y="2" width="1" height="1" fill="#000"/><rect x="8" y="2" width="1" height="1" fill="#000"/><rect x="9" y="2" width="1" height="1" fill="#000"/><rect x="10" y="2" width="1" height="1" fill="#000"/><rect x="11" y="2" width="1" height="1" fill="#fff"/><rect x="12" y="2" width="1" height="1" fill="#000"/><rect x="3" y="3" width="1" height="1" fill="#000"/><rect x="4" y="3" width="1" height="1" fill="#fff"/><rect x="5" y="3" width="1" height="1" fill="#fff"/><rect x="6" y="3" width="1" height="1" fill="#fff"/><rect x="7" y="3" width="1" height="1" fill="#fff"/><rect x="8" y="3" width="1" height="1" fill="#fff"/><rect x="9" y="3" width="1" height="1" fill="#fff"/><rect x="10" y="3" width="1" height="1" fill="#fff"/><rect x="11" y="3" width="1" height="1" fill="#fff"/><rect x="12" y="3" width="1" height="1" fill="#000"/><rect x="3" y="4" width="1" height="1" fill="#000"/><rect x="4" y="4" width="1" height="1" fill="#fff"/><rect x="5" y="4" width="1" height="1" fill="#000"/><rect x="6" y="4" width="1" height="1" fill="#000"/><rect x="7" y="4" width="1" height="1" fill="#000"/><rect x="8" y="4" width="1" height="1" fill="#000"/><rect x="9" y="4" width="1" height="1" fill="#000"/><rect x="10" y="4" width="1" height="1" fill="#fff"/><rect x="11" y="4" width="1" height="1" fill="#000"/><rect x="12" y="4" width="1" height="1" fill="#fff"/><rect x="13" y="4" width="1" height="1" fill="#000"/><rect x="2" y="5" width="1" height="1" fill="#000"/><rect x="3" y="5" width="1" height="1" fill="#fff"/><rect x="4" y="5" width="1" height="1" fill="#fff"/><rect x="5" y="5" width="1" height="1" fill="#fff"/><rect x="6" y="5" width="1" height="1" fill="#fff"/><rect x="7" y="5" width="1" height="1" fill="#fff"/><rect x="8" y="5" width="1" height="1" fill="#fff"/><rect x="9" y="5" width="1" height="1" fill="#fff"/><rect x="10" y="5" width="1" height="1" fill="#fff"/><rect x="11" y="5" width="1" height="1" fill="#000"/><rect x="12" y="5" width="1" height="1" fill="#808080"/><rect x="13" y="5" width="1" height="1" fill="#fff"/><rect x="14" y="5" width="1" height="1" fill="#808080"/><rect x="15" y="5" width="1" height="1" fill="#000"/><rect x="1" y="6" width="1" height="1" fill="#000"/><rect x="2" y="6" width="1" height="1" fill="#000"/><rect x="3" y="6" width="1" height="1" fill="#000"/><rect x="4" y="6" width="1" height="1" fill="#000"/><rect x="5" y="6" width="1" height="1" fill="#000"/><rect x="6" y="6" width="1" height="1" fill="#000"/><rect x="7" y="6" width="1" height="1" fill="#000"/><rect x="8" y="6" width="1" height="1" fill="#000"/><rect x="9" y="6" width="1" height="1" fill="#000"/><rect x="10" y="6" width="1" height="1" fill="#000"/><rect x="11" y="6" width="1" height="1" fill="#000"/><rect x="12" y="6" width="1" height="1" fill="#fff"/><rect x="13" y="6" width="1" height="1" fill="#808080"/><rect x="14" y="6" width="1" height="1" fill="#fff"/><rect x="15" y="6" width="1" height="1" fill="#000"/><rect x="0" y="7" width="1" height="1" fill="#000"/><rect x="1" y="7" width="1" height="1" fill="#fff"/><rect x="2" y="7" width="1" height="1" fill="#fff"/><rect x="3" y="7" width="1" height="1" fill="#fff"/><rect x="4" y="7" width="1" height="1" fill="#fff"/><rect x="5" y="7" width="1" height="1" fill="#fff"/><rect x="6" y="7" width="1" height="1" fill="#fff"/><rect x="7" y="7" width="1" height="1" fill="#fff"/><rect x="8" y="7" width="1" height="1" fill="#fff"/><rect x="9" y="7" width="1" height="1" fill="#fff"/><rect x="10" y="7" width="1" height="1" fill="#fff"/><rect x="11" y="7" width="1" height="1" fill="#fff"/><rect x="12" y="7" width="1" height="1" fill="#000"/><rect x="13" y="7" width="1" height="1" fill="#fff"/><rect x="14" y="7" width="1" height="1" fill="#808080"/><rect x="15" y="7" width="1" height="1" fill="#000"/><rect x="0" y="8" width="1" height="1" fill="#000"/><rect x="1" y="8" width="1" height="1" fill="#000"/><rect x="2" y="8" width="1" height="1" fill="#000"/><rect x="3" y="8" width="1" height="1" fill="#000"/><rect x="4" y="8" width="1" height="1" fill="#000"/><rect x="5" y="8" width="1" height="1" fill="#000"/><rect x="6" y="8" width="1" height="1" fill="#000"/><rect x="7" y="8" width="1" height="1" fill="#000"/><rect x="8" y="8" width="1" height="1" fill="#000"/><rect x="9" y="8" width="1" height="1" fill="#000"/><rect x="10" y="8" width="1" height="1" fill="#000"/><rect x="11" y="8" width="1" height="1" fill="#000"/><rect x="12" y="8" width="1" height="1" fill="#000"/><rect x="13" y="8" width="1" height="1" fill="#808080"/><rect x="14" y="8" width="1" height="1" fill="#fff"/><rect x="15" y="8" width="1" height="1" fill="#000"/><rect x="0" y="9" width="1" height="1" fill="#000"/><rect x="1" y="9" width="1" height="1" fill="#fff"/><rect x="2" y="9" width="1" height="1" fill="#fff"/><rect x="3" y="9" width="1" height="1" fill="#fff"/><rect x="4" y="9" width="1" height="1" fill="#fff"/><rect x="5" y="9" width="1" height="1" fill="#fff"/><rect x="6" y="9" width="1" height="1" fill="#fff"/><rect x="7" y="9" width="1" height="1" fill="#000"/><rect x="8" y="9" width="1" height="1" fill="#000"/><rect x="9" y="9" width="1" height="1" fill="#000"/><rect x="10" y="9" width="1" height="1" fill="#fff"/><rect x="11" y="9" width="1" height="1" fill="#fff"/><rect x="12" y="9" width="1" height="1" fill="#000"/><rect x="13" y="9" width="1" height="1" fill="#fff"/><rect x="14" y="9" width="1" height="1" fill="#000"/><rect x="0" y="10" width="1" height="1" fill="#000"/><rect x="1" y="10" width="1" height="1" fill="#fff"/><rect x="2" y="10" width="1" height="1" fill="#fff"/><rect x="3" y="10" width="1" height="1" fill="#fff"/><rect x="4" y="10" width="1" height="1" fill="#fff"/><rect x="5" y="10" width="1" height="1" fill="#fff"/><rect x="6" y="10" width="1" height="1" fill="#fff"/><rect x="7" y="10" width="1" height="1" fill="#ffff00"/><rect x="8" y="10" width="1" height="1" fill="#ffff00"/><rect x="9" y="10" width="1" height="1" fill="#ffff00"/><rect x="10" y="10" width="1" height="1" fill="#fff"/><rect x="11" y="10" width="1" height="1" fill="#fff"/><rect x="12" y="10" width="1" height="1" fill="#000"/><rect x="13" y="10" width="1" height="1" fill="#808080"/><rect x="14" y="10" width="1" height="1" fill="#000"/><rect x="0" y="11" width="1" height="1" fill="#000"/><rect x="1" y="11" width="1" height="1" fill="#000"/><rect x="2" y="11" width="1" height="1" fill="#000"/><rect x="3" y="11" width="1" height="1" fill="#000"/><rect x="4" y="11" width="1" height="1" fill="#000"/><rect x="5" y="11" width="1" height="1" fill="#000"/><rect x="6" y="11" width="1" height="1" fill="#000"/><rect x="7" y="11" width="1" height="1" fill="#000"/><rect x="8" y="11" width="1" height="1" fill="#000"/><rect x="9" y="11" width="1" height="1" fill="#000"/><rect x="10" y="11" width="1" height="1" fill="#000"/><rect x="11" y="11" width="1" height="1" fill="#000"/><rect x="12" y="11" width="1" height="1" fill="#000"/><rect x="13" y="11" width="1" height="1" fill="#fff"/><rect x="14" y="11" width="1" height="1" fill="#000"/><rect x="1" y="12" width="1" height="1" fill="#000"/><rect x="2" y="12" width="1" height="1" fill="#fff"/><rect x="3" y="12" width="1" height="1" fill="#fff"/><rect x="4" y="12" width="1" height="1" fill="#fff"/><rect x="5" y="12" width="1" height="1" fill="#fff"/><rect x="6" y="12" width="1" height="1" fill="#fff"/><rect x="7" y="12" width="1" height="1" fill="#fff"/><rect x="8" y="12" width="1" height="1" fill="#fff"/><rect x="9" y="12" width="1" height="1" fill="#fff"/><rect x="10" y="12" width="1" height="1" fill="#fff"/><rect x="11" y="12" width="1" height="1" fill="#000"/><rect x="12" y="12" width="1" height="1" fill="#808080"/><rect x="13" y="12" width="1" height="1" fill="#000"/><rect x="2" y="13" width="1" height="1" fill="#000"/><rect x="3" y="13" width="1" height="1" fill="#000"/><rect x="4" y="13" width="1" height="1" fill="#000"/><rect x="5" y="13" width="1" height="1" fill="#000"/><rect x="6" y="13" width="1" height="1" fill="#000"/><rect x="7" y="13" width="1" height="1" fill="#000"/><rect x="8" y="13" width="1" height="1" fill="#000"/><rect x="9" y="13" width="1" height="1" fill="#000"/><rect x="10" y="13" width="1" height="1" fill="#000"/><rect x="11" y="13" width="1" height="1" fill="#000"/><rect x="12" y="13" width="1" height="1" fill="#000"/></svg>
<svg style="left:659px;top:472px" width="14" height="14" shape-rendering="crispEdges"><rect x="0" y="0" width="1" height="1" fill="#000"/><rect x="1" y="0" width="1" height="1" fill="#000"/><rect x="2" y="0" width="1" height="1" fill="#000"/><rect x="3" y="0" width="1" height="1" fill="#000"/><rect x="4" y="0" width="1" height="1" fill="#000"/><rect x="5" y="0" width="1" height="1" fill="#000"/><rect x="6" y="0" width="1" height="1" fill="#000"/><rect x="7" y="0" width="1" height="1" fill="#000"/><rect x="8" y="0" width="1" height="1" fill="#000"/><rect x="9" y="0" width="1" height="1" fill="#000"/><rect x="10" y="0" width="1" height="1" fill="#000"/><rect x="11" y="0" width="1" height="1" fill="#000"/><rect x="12" y="0" width="1" height="1" fill="#000"/><rect x="13" y="0" width="1" height="1" fill="#000"/><rect x="0" y="1" width="1" height="1" fill="#000"/><rect x="1" y="1" width="1" height="1" fill="#808000"/><rect x="2" y="1" width="1" height="1" fill="#000"/><rect x="3" y="1" width="1" height="1" fill="#fff"/><rect x="4" y="1" width="1" height="1" fill="#fff"/><rect x="5" y="1" width="1" height="1" fill="#fff"/><rect x="6" y="1" width="1" height="1" fill="#fff"/><rect x="7" y="1" width="1" height="1" fill="#fff"/><rect x="8" y="1" width="1" height="1" fill="#fff"/><rect x="9" y="1" width="1" height="1" fill="#fff"/><rect x="10" y="1" width="1" height="1" fill="#fff"/><rect x="11" y="1" width="1" height="1" fill="#000"/><rect x="12" y="1" width="1" height="1" fill="#fff"/><rect x="13" y="1" width="1" height="1" fill="#000"/><rect x="0" y="2" width="1" height="1" fill="#000"/><rect x="1" y="2" width="1" height="1" fill="#808000"/><rect x="2" y="2" width="1" height="1" fill="#000"/><rect x="3" y="2" width="1" height="1" fill="#fff"/><rect x="4" y="2" width="1" height="1" fill="#e8e8e0"/><rect x="5" y="2" width="1" height="1" fill="#e8e8e0"/><rect x="6" y="2" width="1" height="1" fill="#e8e8e0"/><rect x="7" y="2" width="1" height="1" fill="#e8e8e0"/><rect x="8" y="2" width="1" height="1" fill="#e8e8e0"/><rect x="9" y="2" width="1" height="1" fill="#e8e8e0"/><rect x="10" y="2" width="1" height="1" fill="#fff"/><rect x="11" y="2" width="1" height="1" fill="#000"/><rect x="12" y="2" width="1" height="1" fill="#000"/><rect x="13" y="2" width="1" height="1" fill="#000"/><rect x="0" y="3" width="1" height="1" fill="#000"/><rect x="1" y="3" width="1" height="1" fill="#808000"/><rect x="2" y="3" width="1" height="1" fill="#000"/><rect x="3" y="3" width="1" height="1" fill="#fff"/><rect x="4" y="3" width="1" height="1" fill="#e8e8e0"/><rect x="5" y="3" width="1" height="1" fill="#e8e8e0"/><rect x="6" y="3" width="1" height="1" fill="#e8e8e0"/><rect x="7" y="3" width="1" height="1" fill="#e8e8e0"/><rect x="8" y="3" width="1" height="1" fill="#e8e8e0"/><rect x="9" y="3" width="1" height="1" fill="#e8e8e0"/><rect x="10" y="3" width="1" height="1" fill="#fff"/><rect x="11" y="3" width="1" height="1" fill="#000"/><rect x="12" y="3" width="1" height="1" fill="#808000"/><rect x="13" y="3" width="1" height="1" fill="#000"/><rect x="0" y="4" width="1" height="1" fill="#000"/><rect x="1" y="4" width="1" height="1" fill="#808000"/><rect x="2" y="4" width="1" height="1" fill="#000"/><rect x="3" y="4" width="1" height="1" fill="#fff"/><rect x="4" y="4" width="1" height="1" fill="#e8e8e0"/><rect x="5" y="4" width="1" height="1" fill="#e8e8e0"/><rect x="6" y="4" width="1" height="1" fill="#e8e8e0"/><rect x="7" y="4" width="1" height="1" fill="#e8e8e0"/><rect x="8" y="4" width="1" height="1" fill="#e8e8e0"/><rect x="9" y="4" width="1" height="1" fill="#e8e8e0"/><rect x="10" y="4" width="1" height="1" fill="#fff"/><rect x="11" y="4" width="1" height="1" fill="#000"/><rect x="12" y="4" width="1" height="1" fill="#808000"/><rect x="13" y="4" width="1" height="1" fill="#000"/><rect x="0" y="5" width="1" height="1" fill="#000"/><rect x="1" y="5" width="1" height="1" fill="#808000"/><rect x="2" y="5" width="1" height="1" fill="#000"/><rect x="3" y="5" width="1" height="1" fill="#fff"/><rect x="4" y="5" width="1" height="1" fill="#e8e8e0"/><rect x="5" y="5" width="1" height="1" fill="#e8e8e0"/><rect x="6" y="5" width="1" height="1" fill="#e8e8e0"/><rect x="7" y="5" width="1" height="1" fill="#e8e8e0"/><rect x="8" y="5" width="1" height="1" fill="#e8e8e0"/><rect x="9" y="5" width="1" height="1" fill="#e8e8e0"/><rect x="10" y="5" width="1" height="1" fill="#fff"/><rect x="11" y="5" width="1" height="1" fill="#000"/><rect x="12" y="5" width="1" height="1" fill="#808000"/><rect x="13" y="5" width="1" height="1" fill="#000"/><rect x="0" y="6" width="1" height="1" fill="#000"/><rect x="1" y="6" width="1" height="1" fill="#808000"/><rect x="2" y="6" width="1" height="1" fill="#000"/><rect x="3" y="6" width="1" height="1" fill="#fff"/><rect x="4" y="6" width="1" height="1" fill="#fff"/><rect x="5" y="6" width="1" height="1" fill="#fff"/><rect x="6" y="6" width="1" height="1" fill="#fff"/><rect x="7" y="6" width="1" height="1" fill="#fff"/><rect x="8" y="6" width="1" height="1" fill="#fff"/><rect x="9" y="6" width="1" height="1" fill="#fff"/><rect x="10" y="6" width="1" height="1" fill="#fff"/><rect x="11" y="6" width="1" height="1" fill="#000"/><rect x="12" y="6" width="1" height="1" fill="#808000"/><rect x="13" y="6" width="1" height="1" fill="#000"/><rect x="0" y="7" width="1" height="1" fill="#000"/><rect x="1" y="7" width="1" height="1" fill="#808000"/><rect x="2" y="7" width="1" height="1" fill="#000"/><rect x="3" y="7" width="1" height="1" fill="#000"/><rect x="4" y="7" width="1" height="1" fill="#000"/><rect x="5" y="7" width="1" height="1" fill="#000"/><rect x="6" y="7" width="1" height="1" fill="#000"/><rect x="7" y="7" width="1" height="1" fill="#000"/><rect x="8" y="7" width="1" height="1" fill="#000"/><rect x="9" y="7" width="1" height="1" fill="#000"/><rect x="10" y="7" width="1" height="1" fill="#000"/><rect x="11" y="7" width="1" height="1" fill="#000"/><rect x="12" y="7" width="1" height="1" fill="#808000"/><rect x="13" y="7" width="1" height="1" fill="#000"/><rect x="0" y="8" width="1" height="1" fill="#000"/><rect x="1" y="8" width="1" height="1" fill="#808000"/><rect x="2" y="8" width="1" height="1" fill="#808000"/><rect x="3" y="8" width="1" height="1" fill="#808000"/><rect x="4" y="8" width="1" height="1" fill="#808000"/><rect x="5" y="8" width="1" height="1" fill="#808000"/><rect x="6" y="8" width="1" height="1" fill="#808000"/><rect x="7" y="8" width="1" height="1" fill="#808000"/><rect x="8" y="8" width="1" height="1" fill="#808000"/><rect x="9" y="8" width="1" height="1" fill="#808000"/><rect x="10" y="8" width="1" height="1" fill="#808000"/><rect x="11" y="8" width="1" height="1" fill="#808000"/><rect x="12" y="8" width="1" height="1" fill="#808000"/><rect x="13" y="8" width="1" height="1" fill="#000"/><rect x="0" y="9" width="1" height="1" fill="#000"/><rect x="1" y="9" width="1" height="1" fill="#808000"/><rect x="2" y="9" width="1" height="1" fill="#000"/><rect x="3" y="9" width="1" height="1" fill="#000"/><rect x="4" y="9" width="1" height="1" fill="#000"/><rect x="5" y="9" width="1" height="1" fill="#000"/><rect x="6" y="9" width="1" height="1" fill="#000"/><rect x="7" y="9" width="1" height="1" fill="#000"/><rect x="8" y="9" width="1" height="1" fill="#000"/><rect x="9" y="9" width="1" height="1" fill="#000"/><rect x="10" y="9" width="1" height="1" fill="#000"/><rect x="11" y="9" width="1" height="1" fill="#000"/><rect x="12" y="9" width="1" height="1" fill="#808000"/><rect x="13" y="9" width="1" height="1" fill="#000"/><rect x="0" y="10" width="1" height="1" fill="#000"/><rect x="1" y="10" width="1" height="1" fill="#808000"/><rect x="2" y="10" width="1" height="1" fill="#000"/><rect x="3" y="10" width="1" height="1" fill="#000"/><rect x="4" y="10" width="1" height="1" fill="#000"/><rect x="5" y="10" width="1" height="1" fill="#000"/><rect x="6" y="10" width="1" height="1" fill="#000"/><rect x="7" y="10" width="1" height="1" fill="#000"/><rect x="8" y="10" width="1" height="1" fill="#000"/><rect x="9" y="10" width="1" height="1" fill="#fff"/><rect x="10" y="10" width="1" height="1" fill="#fff"/><rect x="11" y="10" width="1" height="1" fill="#000"/><rect x="12" y="10" width="1" height="1" fill="#808000"/><rect x="13" y="10" width="1" height="1" fill="#000"/><rect x="0" y="11" width="1" height="1" fill="#000"/><rect x="1" y="11" width="1" height="1" fill="#808000"/><rect x="2" y="11" width="1" height="1" fill="#000"/><rect x="3" y="11" width="1" height="1" fill="#000"/><rect x="4" y="11" width="1" height="1" fill="#000"/><rect x="5" y="11" width="1" height="1" fill="#000"/><rect x="6" y="11" width="1" height="1" fill="#000"/><rect x="7" y="11" width="1" height="1" fill="#000"/><rect x="8" y="11" width="1" height="1" fill="#000"/><rect x="9" y="11" width="1" height="1" fill="#fff"/><rect x="10" y="11" width="1" height="1" fill="#fff"/><rect x="11" y="11" width="1" height="1" fill="#000"/><rect x="12" y="11" width="1" height="1" fill="#808000"/><rect x="13" y="11" width="1" height="1" fill="#000"/><rect x="0" y="12" width="1" height="1" fill="#000"/><rect x="1" y="12" width="1" height="1" fill="#808000"/><rect x="2" y="12" width="1" height="1" fill="#000"/><rect x="3" y="12" width="1" height="1" fill="#000"/><rect x="4" y="12" width="1" height="1" fill="#000"/><rect x="5" y="12" width="1" height="1" fill="#000"/><rect x="6" y="12" width="1" height="1" fill="#000"/><rect x="7" y="12" width="1" height="1" fill="#000"/><rect x="8" y="12" width="1" height="1" fill="#000"/><rect x="9" y="12" width="1" height="1" fill="#fff"/><rect x="10" y="12" width="1" height="1" fill="#fff"/><rect x="11" y="12" width="1" height="1" fill="#000"/><rect x="12" y="12" width="1" height="1" fill="#808000"/><rect x="13" y="12" width="1" height="1" fill="#000"/><rect x="0" y="13" width="1" height="1" fill="#000"/><rect x="1" y="13" width="1" height="1" fill="#000"/><rect x="2" y="13" width="1" height="1" fill="#000"/><rect x="3" y="13" width="1" height="1" fill="#000"/><rect x="4" y="13" width="1" height="1" fill="#000"/><rect x="5" y="13" width="1" height="1" fill="#000"/><rect x="6" y="13" width="1" height="1" fill="#000"/><rect x="7" y="13" width="1" height="1" fill="#000"/><rect x="8" y="13" width="1" height="1" fill="#000"/><rect x="9" y="13" width="1" height="1" fill="#000"/><rect x="10" y="13" width="1" height="1" fill="#000"/><rect x="11" y="13" width="1" height="1" fill="#000"/><rect x="12" y="13" width="1" height="1" fill="#000"/><rect x="13" y="13" width="1" height="1" fill="#000"/></svg>
<svg style="left:690px;top:472px" width="15" height="13" shape-rendering="crispEdges"><rect x="2" y="0" width="1" height="1" fill="#808080"/><rect x="3" y="0" width="1" height="1" fill="#808080"/><rect x="4" y="0" width="1" height="1" fill="#808080"/><rect x="5" y="0" width="1" height="1" fill="#808080"/><rect x="6" y="0" width="1" height="1" fill="#808080"/><rect x="7" y="0" width="1" height="1" fill="#808080"/><rect x="1" y="1" width="1" height="1" fill="#808080"/><rect x="2" y="1" width="1" height="1" fill="#ffff00"/><rect x="3" y="1" width="1" height="1" fill="#f4f4f4"/><rect x="4" y="1" width="1" height="1" fill="#ffff00"/><rect x="5" y="1" width="1" height="1" fill="#f4f4f4"/><rect x="6" y="1" width="1" height="1" fill="#ffff00"/><rect x="7" y="1" width="1" height="1" fill="#f4f4f4"/><rect x="8" y="1" width="1" height="1" fill="#808080"/><rect x="0" y="2" width="1" height="1" fill="#808080"/><rect x="1" y="2" width="1" height="1" fill="#ffff00"/><rect x="2" y="2" width="1" height="1" fill="#f4f4f4"/><rect x="3" y="2" width="1" height="1" fill="#ffff00"/><rect x="4" y="2" width="1" height="1" fill="#f4f4f4"/><rect x="5" y="2" width="1" height="1" fill="#ffff00"/><rect x="6" y="2" width="1" height="1" fill="#f4f4f4"/><rect x="7" y="2" width="1" height="1" fill="#ffff00"/><rect x="8" y="2" width="1" height="1" fill="#f4f4f4"/><rect x="9" y="2" width="1" height="1" fill="#808080"/><rect x="10" y="2" width="1" height="1" fill="#808080"/><rect x="11" y="2" width="1" height="1" fill="#808080"/><rect x="12" y="2" width="1" height="1" fill="#808080"/><rect x="13" y="2" width="1" height="1" fill="#808080"/><rect x="0" y="3" width="1" height="1" fill="#808080"/><rect x="1" y="3" width="1" height="1" fill="#f4f4f4"/><rect x="2" y="3" width="1" height="1" fill="#ffff00"/><rect x="3" y="3" width="1" height="1" fill="#f4f4f4"/><rect x="4" y="3" width="1" height="1" fill="#ffff00"/><rect x="5" y="3" width="1" height="1" fill="#f4f4f4"/><rect x="6" y="3" width="1" height="1" fill="#ffff00"/><rect x="7" y="3" width="1" height="1" fill="#f4f4f4"/><rect x="8" y="3" width="1" height="1" fill="#ffff00"/><rect x="9" y="3" width="1" height="1" fill="#f4f4f4"/><rect x="10" y="3" width="1" height="1" fill="#ffff00"/><rect x="11" y="3" width="1" height="1" fill="#f4f4f4"/><rect x="12" y="3" width="1" height="1" fill="#ffff00"/><rect x="13" y="3" width="1" height="1" fill="#f4f4f4"/><rect x="14" y="3" width="1" height="1" fill="#000"/><rect x="0" y="4" width="1" height="1" fill="#808080"/><rect x="1" y="4" width="1" height="1" fill="#ffff00"/><rect x="2" y="4" width="1" height="1" fill="#f4f4f4"/><rect x="3" y="4" width="1" height="1" fill="#ffff00"/><rect x="4" y="4" width="1" height="1" fill="#000"/><rect x="5" y="4" width="1" height="1" fill="#f4f4f4"/><rect x="6" y="4" width="1" height="1" fill="#ffff00"/><rect x="7" y="4" width="1" height="1" fill="#f4f4f4"/><rect x="8" y="4" width="1" height="1" fill="#ffff00"/><rect x="9" y="4" width="1" height="1" fill="#f4f4f4"/><rect x="10" y="4" width="1" height="1" fill="#ffff00"/><rect x="11" y="4" width="1" height="1" fill="#000"/><rect x="12" y="4" width="1" height="1" fill="#ffff00"/><rect x="13" y="4" width="1" height="1" fill="#f4f4f4"/><rect x="14" y="4" width="1" height="1" fill="#000"/><rect x="0" y="5" width="1" height="1" fill="#808080"/><rect x="1" y="5" width="1" height="1" fill="#f4f4f4"/><rect x="2" y="5" width="1" height="1" fill="#ffff00"/><rect x="3" y="5" width="1" height="1" fill="#000"/><rect x="4" y="5" width="1" height="1" fill="#f4f4f4"/><rect x="5" y="5" width="1" height="1" fill="#000"/><rect x="6" y="5" width="1" height="1" fill="#000"/><rect x="7" y="5" width="1" height="1" fill="#f4f4f4"/><rect x="8" y="5" width="1" height="1" fill="#ffff00"/><rect x="9" y="5" width="1" height="1" fill="#000"/><rect x="10" y="5" width="1" height="1" fill="#f4f4f4"/><rect x="11" y="5" width="1" height="1" fill="#000"/><rect x="12" y="5" width="1" height="1" fill="#f4f4f4"/><rect x="13" y="5" width="1" height="1" fill="#ffff00"/><rect x="14" y="5" width="1" height="1" fill="#000"/><rect x="0" y="6" width="1" height="1" fill="#808080"/><rect x="1" y="6" width="1" height="1" fill="#ffff00"/><rect x="2" y="6" width="1" height="1" fill="#000"/><rect x="3" y="6" width="1" height="1" fill="#f4f4f4"/><rect x="4" y="6" width="1" height="1" fill="#f4f4f4"/><rect x="5" y="6" width="1" height="1" fill="#000"/><rect x="6" y="6" width="1" height="1" fill="#f4f4f4"/><rect x="7" y="6" width="1" height="1" fill="#f4f4f4"/><rect x="8" y="6" width="1" height="1" fill="#000"/><rect x="9" y="6" width="1" height="1" fill="#000"/><rect x="10" y="6" width="1" height="1" fill="#000"/><rect x="11" y="6" width="1" height="1" fill="#f4f4f4"/><rect x="12" y="6" width="1" height="1" fill="#ffff00"/><rect x="13" y="6" width="1" height="1" fill="#f4f4f4"/><rect x="14" y="6" width="1" height="1" fill="#000"/><rect x="0" y="7" width="1" height="1" fill="#808080"/><rect x="1" y="7" width="1" height="1" fill="#f4f4f4"/><rect x="2" y="7" width="1" height="1" fill="#ffff00"/><rect x="3" y="7" width="1" height="1" fill="#000"/><rect x="4" y="7" width="1" height="1" fill="#ffff00"/><rect x="5" y="7" width="1" height="1" fill="#f4f4f4"/><rect x="6" y="7" width="1" height="1" fill="#ffff00"/><rect x="7" y="7" width="1" height="1" fill="#000"/><rect x="8" y="7" width="1" height="1" fill="#ffff00"/><rect x="9" y="7" width="1" height="1" fill="#000"/><rect x="10" y="7" width="1" height="1" fill="#ffff00"/><rect x="11" y="7" width="1" height="1" fill="#f4f4f4"/><rect x="12" y="7" width="1" height="1" fill="#ffff00"/><rect x="13" y="7" width="1" height="1" fill="#f4f4f4"/><rect x="14" y="7" width="1" height="1" fill="#000"/><rect x="0" y="8" width="1" height="1" fill="#808080"/><rect x="1" y="8" width="1" height="1" fill="#ffff00"/><rect x="2" y="8" width="1" height="1" fill="#f4f4f4"/><rect x="3" y="8" width="1" height="1" fill="#ffff00"/><rect x="4" y="8" width="1" height="1" fill="#f4f4f4"/><rect x="5" y="8" width="1" height="1" fill="#ffff00"/><rect x="6" y="8" width="1" height="1" fill="#0000ff"/><rect x="7" y="8" width="1" height="1" fill="#ffff00"/><rect x="8" y="8" width="1" height="1" fill="#f4f4f4"/><rect x="9" y="8" width="1" height="1" fill="#ff0000"/><rect x="10" y="8" width="1" height="1" fill="#a000a0"/><rect x="11" y="8" width="1" height="1" fill="#f4f4f4"/><rect x="12" y="8" width="1" height="1" fill="#ffff00"/><rect x="13" y="8" width="1" height="1" fill="#f4f4f4"/><rect x="14" y="8" width="1" height="1" fill="#000"/><rect x="0" y="9" width="1" height="1" fill="#808080"/><rect x="1" y="9" width="1" height="1" fill="#f4f4f4"/><rect x="2" y="9" width="1" height="1" fill="#ffff00"/><rect x="3" y="9" width="1" height="1" fill="#f4f4f4"/><rect x="4" y="9" width="1" height="1" fill="#ffff00"/><rect x="5" y="9" width="1" height="1" fill="#f4f4f4"/><rect x="6" y="9" width="1" height="1" fill="#0000ff"/><rect x="7" y="9" width="1" height="1" fill="#f4f4f4"/><rect x="8" y="9" width="1" height="1" fill="#ffff00"/><rect x="9" y="9" width="1" height="1" fill="#ff0000"/><rect x="10" y="9" width="1" height="1" fill="#a000a0"/><rect x="11" y="9" width="1" height="1" fill="#ffff00"/><rect x="12" y="9" width="1" height="1" fill="#f4f4f4"/><rect x="13" y="9" width="1" height="1" fill="#ffff00"/><rect x="14" y="9" width="1" height="1" fill="#000"/><rect x="0" y="10" width="1" height="1" fill="#808080"/><rect x="1" y="10" width="1" height="1" fill="#ffff00"/><rect x="2" y="10" width="1" height="1" fill="#f4f4f4"/><rect x="3" y="10" width="1" height="1" fill="#ffff00"/><rect x="4" y="10" width="1" height="1" fill="#f4f4f4"/><rect x="5" y="10" width="1" height="1" fill="#ffff00"/><rect x="6" y="10" width="1" height="1" fill="#f4f4f4"/><rect x="7" y="10" width="1" height="1" fill="#ffff00"/><rect x="8" y="10" width="1" height="1" fill="#f4f4f4"/><rect x="9" y="10" width="1" height="1" fill="#ffff00"/><rect x="10" y="10" width="1" height="1" fill="#f4f4f4"/><rect x="11" y="10" width="1" height="1" fill="#ffff00"/><rect x="12" y="10" width="1" height="1" fill="#f4f4f4"/><rect x="13" y="10" width="1" height="1" fill="#ffff00"/><rect x="14" y="10" width="1" height="1" fill="#000"/><rect x="1" y="11" width="1" height="1" fill="#808080"/><rect x="2" y="11" width="1" height="1" fill="#808080"/><rect x="3" y="11" width="1" height="1" fill="#808080"/><rect x="4" y="11" width="1" height="1" fill="#808080"/><rect x="5" y="11" width="1" height="1" fill="#808080"/><rect x="6" y="11" width="1" height="1" fill="#808080"/><rect x="7" y="11" width="1" height="1" fill="#808080"/><rect x="8" y="11" width="1" height="1" fill="#808080"/><rect x="9" y="11" width="1" height="1" fill="#808080"/><rect x="10" y="11" width="1" height="1" fill="#808080"/><rect x="11" y="11" width="1" height="1" fill="#808080"/><rect x="12" y="11" width="1" height="1" fill="#808080"/><rect x="13" y="11" width="1" height="1" fill="#808080"/><rect x="14" y="11" width="1" height="1" fill="#000"/><rect x="1" y="12" width="1" height="1" fill="#000"/><rect x="2" y="12" width="1" height="1" fill="#000"/><rect x="3" y="12" width="1" height="1" fill="#000"/><rect x="4" y="12" width="1" height="1" fill="#000"/><rect x="5" y="12" width="1" height="1" fill="#000"/><rect x="6" y="12" width="1" height="1" fill="#000"/><rect x="7" y="12" width="1" height="1" fill="#000"/><rect x="8" y="12" width="1" height="1" fill="#000"/><rect x="9" y="12" width="1" height="1" fill="#000"/><rect x="10" y="12" width="1" height="1" fill="#000"/><rect x="11" y="12" width="1" height="1" fill="#000"/><rect x="12" y="12" width="1" height="1" fill="#000"/><rect x="13" y="12" width="1" height="1" fill="#000"/><rect x="14" y="12" width="1" height="1" fill="#000"/></svg>
</div></body></html>
